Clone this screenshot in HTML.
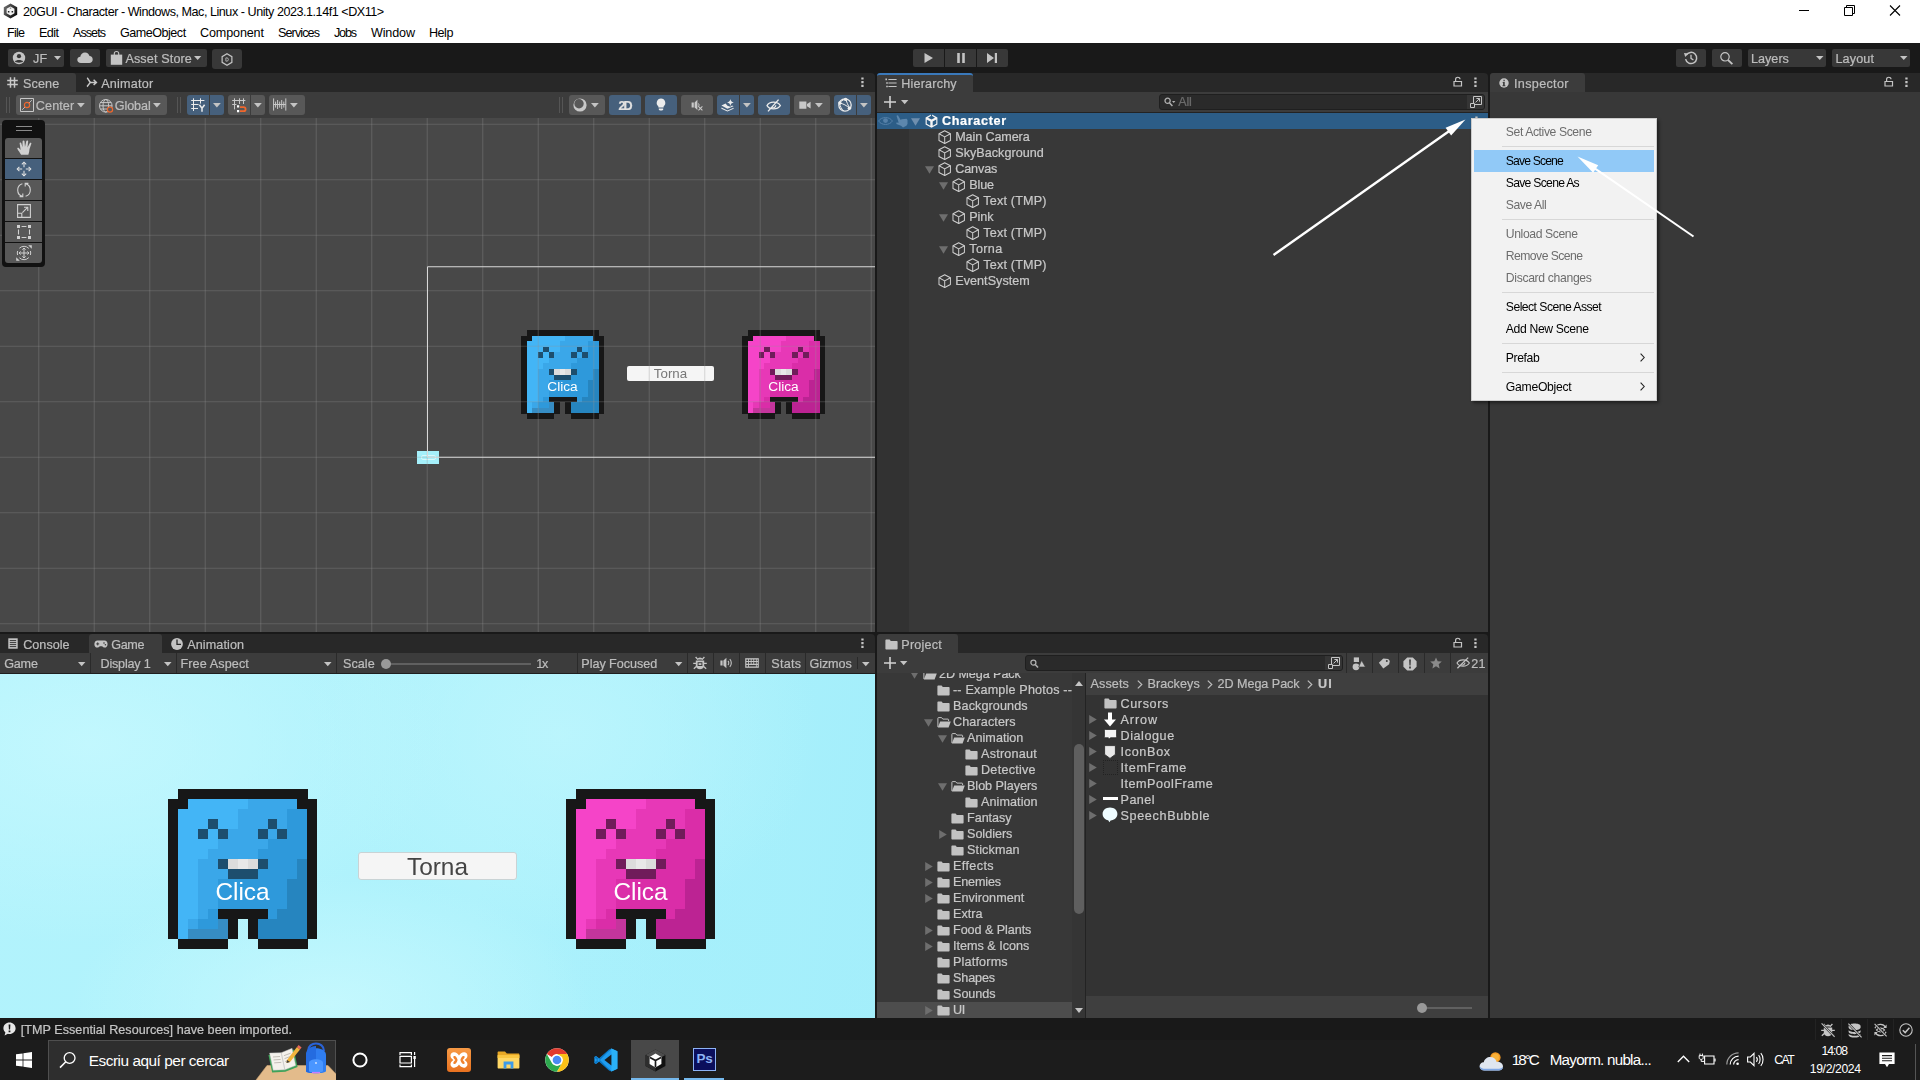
<!DOCTYPE html>
<html lang="en"><head><meta charset="utf-8"><title>20GUI - Character - Unity</title>
<style>

*{box-sizing:border-box;margin:0;padding:0}
html,body{width:1920px;height:1080px;overflow:hidden;background:#383838}
body{position:relative;font-family:"Liberation Sans",sans-serif;font-size:12px;color:#bdbdbd;line-height:1}
.a{position:absolute}
.t{position:absolute;white-space:nowrap;line-height:16px;height:16px;font-size:12.4px;letter-spacing:0.15px;-webkit-text-stroke:0.22px currentColor}
.b{position:absolute;background:#383838;border-radius:2px}
svg{position:absolute;overflow:visible}
.ic{fill:none;stroke:#c4c4c4;stroke-width:1}


.win{position:absolute;white-space:nowrap;color:#000;font-size:12px;line-height:16px;height:16px}


.tb{position:absolute;background:#383838;border-radius:2px;top:49px;height:18px}


.sb{position:absolute;background:#585858;border-radius:3px;top:95px;height:20px}
.sb.on{background:#46607c}


.clica{position:absolute;color:#fff;white-space:nowrap;text-align:center;font-family:"Liberation Sans",sans-serif}
.torna{position:absolute;background:#f5f5f5;color:#323232;text-align:center;white-space:nowrap;font-family:"Liberation Sans",sans-serif}


.tk{position:absolute;white-space:nowrap;color:#fff;line-height:20px;height:20px}


.mi{position:absolute;white-space:nowrap;font-size:12.2px;line-height:16px;height:16px;color:#000}
.mi.dis{color:#6d6d6d}

</style></head>
<body>
<svg width="0" height="0" style="position:absolute"><defs>
<linearGradient id="ug" x1="0" y1="0.2" x2="1" y2="0.8"><stop offset="0" stop-color="#707070"/><stop offset="0.5" stop-color="#3a3a3a"/><stop offset="1" stop-color="#050505"/></linearGradient>
<symbol id="blob-b" viewBox="0 0 15 16" preserveAspectRatio="none"><g shape-rendering="crispEdges"><rect x="1" y="0" width="13.02" height="1.02" fill="#171717"/><rect x="0" y="1" width="2.02" height="1.02" fill="#171717"/><rect x="2" y="1" width="6.02" height="1.02" fill="#43b5f6"/><rect x="8" y="1" width="5.02" height="1.02" fill="#3aa7e9"/><rect x="13" y="1" width="2.02" height="1.02" fill="#171717"/><rect x="0" y="2" width="1.02" height="1.02" fill="#171717"/><rect x="1" y="2" width="6.02" height="1.02" fill="#43b5f6"/><rect x="7" y="2" width="5.02" height="1.02" fill="#3aa7e9"/><rect x="12" y="2" width="2.02" height="1.02" fill="#2e99db"/><rect x="14" y="2" width="1.02" height="1.02" fill="#171717"/><rect x="0" y="3" width="1.02" height="1.02" fill="#171717"/><rect x="1" y="3" width="3.02" height="1.02" fill="#43b5f6"/><rect x="4" y="3" width="1.02" height="1.02" fill="#1d4e6e"/><rect x="5" y="3" width="2.02" height="1.02" fill="#43b5f6"/><rect x="7" y="3" width="3.02" height="1.02" fill="#3aa7e9"/><rect x="10" y="3" width="1.02" height="1.02" fill="#1d4e6e"/><rect x="11" y="3" width="1.02" height="1.02" fill="#3aa7e9"/><rect x="12" y="3" width="2.02" height="1.02" fill="#2e99db"/><rect x="14" y="3" width="1.02" height="1.02" fill="#171717"/><rect x="0" y="4" width="1.02" height="1.02" fill="#171717"/><rect x="1" y="4" width="2.02" height="1.02" fill="#43b5f6"/><rect x="3" y="4" width="1.02" height="1.02" fill="#1d4e6e"/><rect x="4" y="4" width="1.02" height="1.02" fill="#43b5f6"/><rect x="5" y="4" width="1.02" height="1.02" fill="#1d4e6e"/><rect x="6" y="4" width="3.02" height="1.02" fill="#3aa7e9"/><rect x="9" y="4" width="1.02" height="1.02" fill="#1d4e6e"/><rect x="10" y="4" width="1.02" height="1.02" fill="#3aa7e9"/><rect x="11" y="4" width="1.02" height="1.02" fill="#1d4e6e"/><rect x="12" y="4" width="2.02" height="1.02" fill="#2e99db"/><rect x="14" y="4" width="1.02" height="1.02" fill="#171717"/><rect x="0" y="5" width="1.02" height="1.02" fill="#171717"/><rect x="1" y="5" width="4.02" height="1.02" fill="#43b5f6"/><rect x="5" y="5" width="5.02" height="1.02" fill="#3aa7e9"/><rect x="10" y="5" width="4.02" height="1.02" fill="#2e99db"/><rect x="14" y="5" width="1.02" height="1.02" fill="#171717"/><rect x="0" y="6" width="1.02" height="1.02" fill="#171717"/><rect x="1" y="6" width="3.02" height="1.02" fill="#43b5f6"/><rect x="4" y="6" width="5.02" height="1.02" fill="#3aa7e9"/><rect x="9" y="6" width="5.02" height="1.02" fill="#2e99db"/><rect x="14" y="6" width="1.02" height="1.02" fill="#171717"/><rect x="0" y="7" width="1.02" height="1.02" fill="#171717"/><rect x="1" y="7" width="2.02" height="1.02" fill="#43b5f6"/><rect x="3" y="7" width="2.02" height="1.02" fill="#3aa7e9"/><rect x="5" y="7" width="1.02" height="1.02" fill="#1d4e6e"/><rect x="6" y="7" width="1.02" height="1.02" fill="#dcdcdc"/><rect x="7" y="7" width="1.02" height="1.02" fill="#e8e8e8"/><rect x="8" y="7" width="1.02" height="1.02" fill="#dcdcdc"/><rect x="9" y="7" width="1.02" height="1.02" fill="#1d4e6e"/><rect x="10" y="7" width="3.02" height="1.02" fill="#2e99db"/><rect x="13" y="7" width="1.02" height="1.02" fill="#2685bf"/><rect x="14" y="7" width="1.02" height="1.02" fill="#171717"/><rect x="0" y="8" width="1.02" height="1.02" fill="#171717"/><rect x="1" y="8" width="2.02" height="1.02" fill="#43b5f6"/><rect x="3" y="8" width="3.02" height="1.02" fill="#3aa7e9"/><rect x="6" y="8" width="3.02" height="1.02" fill="#1d4e6e"/><rect x="9" y="8" width="4.02" height="1.02" fill="#2e99db"/><rect x="13" y="8" width="1.02" height="1.02" fill="#2685bf"/><rect x="14" y="8" width="1.02" height="1.02" fill="#171717"/><rect x="0" y="9" width="1.02" height="1.02" fill="#171717"/><rect x="1" y="9" width="2.02" height="1.02" fill="#43b5f6"/><rect x="3" y="9" width="2.02" height="1.02" fill="#3aa7e9"/><rect x="5" y="9" width="7.02" height="1.02" fill="#2e99db"/><rect x="12" y="9" width="2.02" height="1.02" fill="#2685bf"/><rect x="14" y="9" width="1.02" height="1.02" fill="#171717"/><rect x="0" y="10" width="1.02" height="1.02" fill="#171717"/><rect x="1" y="10" width="2.02" height="1.02" fill="#43b5f6"/><rect x="3" y="10" width="2.02" height="1.02" fill="#3aa7e9"/><rect x="5" y="10" width="7.02" height="1.02" fill="#2e99db"/><rect x="12" y="10" width="2.02" height="1.02" fill="#2685bf"/><rect x="14" y="10" width="1.02" height="1.02" fill="#171717"/><rect x="0" y="11" width="1.02" height="1.02" fill="#171717"/><rect x="1" y="11" width="2.02" height="1.02" fill="#43b5f6"/><rect x="3" y="11" width="2.02" height="1.02" fill="#3aa7e9"/><rect x="5" y="11" width="7.02" height="1.02" fill="#2e99db"/><rect x="12" y="11" width="2.02" height="1.02" fill="#2685bf"/><rect x="14" y="11" width="1.02" height="1.02" fill="#171717"/><rect x="0" y="12" width="1.02" height="1.02" fill="#171717"/><rect x="1" y="12" width="2.02" height="1.02" fill="#43b5f6"/><rect x="3" y="12" width="1.02" height="1.02" fill="#3aa7e9"/><rect x="4" y="12" width="1.02" height="1.02" fill="#2e99db"/><rect x="5" y="12" width="5.02" height="1.02" fill="#171717"/><rect x="10" y="12" width="1.02" height="1.02" fill="#2e99db"/><rect x="11" y="12" width="3.02" height="1.02" fill="#2685bf"/><rect x="14" y="12" width="1.02" height="1.02" fill="#171717"/><rect x="0" y="13" width="1.02" height="1.02" fill="#171717"/><rect x="1" y="13" width="1.02" height="1.02" fill="#43b5f6"/><rect x="2" y="13" width="1.02" height="1.02" fill="#3aa7e9"/><rect x="3" y="13" width="2.02" height="1.02" fill="#2e99db"/><rect x="5" y="13" width="1.02" height="1.02" fill="#368dc4"/><rect x="6" y="13" width="1.02" height="1.02" fill="#171717"/><rect x="8" y="13" width="1.02" height="1.02" fill="#171717"/><rect x="9" y="13" width="5.02" height="1.02" fill="#2685bf"/><rect x="14" y="13" width="1.02" height="1.02" fill="#171717"/><rect x="0" y="14" width="1.02" height="1.02" fill="#171717"/><rect x="1" y="14" width="1.02" height="1.02" fill="#43b5f6"/><rect x="2" y="14" width="4.02" height="1.02" fill="#368dc4"/><rect x="6" y="14" width="1.02" height="1.02" fill="#171717"/><rect x="8" y="14" width="1.02" height="1.02" fill="#171717"/><rect x="9" y="14" width="5.02" height="1.02" fill="#2685bf"/><rect x="14" y="14" width="1.02" height="1.02" fill="#171717"/><rect x="1" y="15" width="5.02" height="1.02" fill="#171717"/><rect x="9" y="15" width="5.02" height="1.02" fill="#171717"/></g></symbol>
<symbol id="blob-p" viewBox="0 0 15 16" preserveAspectRatio="none"><g shape-rendering="crispEdges"><rect x="1" y="0" width="13.02" height="1.02" fill="#171717"/><rect x="0" y="1" width="2.02" height="1.02" fill="#171717"/><rect x="2" y="1" width="6.02" height="1.02" fill="#f544c8"/><rect x="8" y="1" width="5.02" height="1.02" fill="#e738b7"/><rect x="13" y="1" width="2.02" height="1.02" fill="#171717"/><rect x="0" y="2" width="1.02" height="1.02" fill="#171717"/><rect x="1" y="2" width="6.02" height="1.02" fill="#f544c8"/><rect x="7" y="2" width="5.02" height="1.02" fill="#e738b7"/><rect x="12" y="2" width="2.02" height="1.02" fill="#da2da8"/><rect x="14" y="2" width="1.02" height="1.02" fill="#171717"/><rect x="0" y="3" width="1.02" height="1.02" fill="#171717"/><rect x="1" y="3" width="3.02" height="1.02" fill="#f544c8"/><rect x="4" y="3" width="1.02" height="1.02" fill="#701c5a"/><rect x="5" y="3" width="2.02" height="1.02" fill="#f544c8"/><rect x="7" y="3" width="3.02" height="1.02" fill="#e738b7"/><rect x="10" y="3" width="1.02" height="1.02" fill="#701c5a"/><rect x="11" y="3" width="1.02" height="1.02" fill="#e738b7"/><rect x="12" y="3" width="2.02" height="1.02" fill="#da2da8"/><rect x="14" y="3" width="1.02" height="1.02" fill="#171717"/><rect x="0" y="4" width="1.02" height="1.02" fill="#171717"/><rect x="1" y="4" width="2.02" height="1.02" fill="#f544c8"/><rect x="3" y="4" width="1.02" height="1.02" fill="#701c5a"/><rect x="4" y="4" width="1.02" height="1.02" fill="#f544c8"/><rect x="5" y="4" width="1.02" height="1.02" fill="#701c5a"/><rect x="6" y="4" width="3.02" height="1.02" fill="#e738b7"/><rect x="9" y="4" width="1.02" height="1.02" fill="#701c5a"/><rect x="10" y="4" width="1.02" height="1.02" fill="#e738b7"/><rect x="11" y="4" width="1.02" height="1.02" fill="#701c5a"/><rect x="12" y="4" width="2.02" height="1.02" fill="#da2da8"/><rect x="14" y="4" width="1.02" height="1.02" fill="#171717"/><rect x="0" y="5" width="1.02" height="1.02" fill="#171717"/><rect x="1" y="5" width="4.02" height="1.02" fill="#f544c8"/><rect x="5" y="5" width="5.02" height="1.02" fill="#e738b7"/><rect x="10" y="5" width="4.02" height="1.02" fill="#da2da8"/><rect x="14" y="5" width="1.02" height="1.02" fill="#171717"/><rect x="0" y="6" width="1.02" height="1.02" fill="#171717"/><rect x="1" y="6" width="3.02" height="1.02" fill="#f544c8"/><rect x="4" y="6" width="5.02" height="1.02" fill="#e738b7"/><rect x="9" y="6" width="5.02" height="1.02" fill="#da2da8"/><rect x="14" y="6" width="1.02" height="1.02" fill="#171717"/><rect x="0" y="7" width="1.02" height="1.02" fill="#171717"/><rect x="1" y="7" width="2.02" height="1.02" fill="#f544c8"/><rect x="3" y="7" width="2.02" height="1.02" fill="#e738b7"/><rect x="5" y="7" width="1.02" height="1.02" fill="#701c5a"/><rect x="6" y="7" width="1.02" height="1.02" fill="#dcdcdc"/><rect x="7" y="7" width="1.02" height="1.02" fill="#e8e8e8"/><rect x="8" y="7" width="1.02" height="1.02" fill="#dcdcdc"/><rect x="9" y="7" width="1.02" height="1.02" fill="#701c5a"/><rect x="10" y="7" width="3.02" height="1.02" fill="#da2da8"/><rect x="13" y="7" width="1.02" height="1.02" fill="#bc2393"/><rect x="14" y="7" width="1.02" height="1.02" fill="#171717"/><rect x="0" y="8" width="1.02" height="1.02" fill="#171717"/><rect x="1" y="8" width="2.02" height="1.02" fill="#f544c8"/><rect x="3" y="8" width="3.02" height="1.02" fill="#e738b7"/><rect x="6" y="8" width="3.02" height="1.02" fill="#701c5a"/><rect x="9" y="8" width="4.02" height="1.02" fill="#da2da8"/><rect x="13" y="8" width="1.02" height="1.02" fill="#bc2393"/><rect x="14" y="8" width="1.02" height="1.02" fill="#171717"/><rect x="0" y="9" width="1.02" height="1.02" fill="#171717"/><rect x="1" y="9" width="2.02" height="1.02" fill="#f544c8"/><rect x="3" y="9" width="2.02" height="1.02" fill="#e738b7"/><rect x="5" y="9" width="7.02" height="1.02" fill="#da2da8"/><rect x="12" y="9" width="2.02" height="1.02" fill="#bc2393"/><rect x="14" y="9" width="1.02" height="1.02" fill="#171717"/><rect x="0" y="10" width="1.02" height="1.02" fill="#171717"/><rect x="1" y="10" width="2.02" height="1.02" fill="#f544c8"/><rect x="3" y="10" width="2.02" height="1.02" fill="#e738b7"/><rect x="5" y="10" width="7.02" height="1.02" fill="#da2da8"/><rect x="12" y="10" width="2.02" height="1.02" fill="#bc2393"/><rect x="14" y="10" width="1.02" height="1.02" fill="#171717"/><rect x="0" y="11" width="1.02" height="1.02" fill="#171717"/><rect x="1" y="11" width="2.02" height="1.02" fill="#f544c8"/><rect x="3" y="11" width="2.02" height="1.02" fill="#e738b7"/><rect x="5" y="11" width="7.02" height="1.02" fill="#da2da8"/><rect x="12" y="11" width="2.02" height="1.02" fill="#bc2393"/><rect x="14" y="11" width="1.02" height="1.02" fill="#171717"/><rect x="0" y="12" width="1.02" height="1.02" fill="#171717"/><rect x="1" y="12" width="2.02" height="1.02" fill="#f544c8"/><rect x="3" y="12" width="1.02" height="1.02" fill="#e738b7"/><rect x="4" y="12" width="1.02" height="1.02" fill="#da2da8"/><rect x="5" y="12" width="5.02" height="1.02" fill="#171717"/><rect x="10" y="12" width="1.02" height="1.02" fill="#da2da8"/><rect x="11" y="12" width="3.02" height="1.02" fill="#bc2393"/><rect x="14" y="12" width="1.02" height="1.02" fill="#171717"/><rect x="0" y="13" width="1.02" height="1.02" fill="#171717"/><rect x="1" y="13" width="1.02" height="1.02" fill="#f544c8"/><rect x="2" y="13" width="1.02" height="1.02" fill="#e738b7"/><rect x="3" y="13" width="2.02" height="1.02" fill="#da2da8"/><rect x="5" y="13" width="1.02" height="1.02" fill="#c4359c"/><rect x="6" y="13" width="1.02" height="1.02" fill="#171717"/><rect x="8" y="13" width="1.02" height="1.02" fill="#171717"/><rect x="9" y="13" width="5.02" height="1.02" fill="#bc2393"/><rect x="14" y="13" width="1.02" height="1.02" fill="#171717"/><rect x="0" y="14" width="1.02" height="1.02" fill="#171717"/><rect x="1" y="14" width="1.02" height="1.02" fill="#f544c8"/><rect x="2" y="14" width="4.02" height="1.02" fill="#c4359c"/><rect x="6" y="14" width="1.02" height="1.02" fill="#171717"/><rect x="8" y="14" width="1.02" height="1.02" fill="#171717"/><rect x="9" y="14" width="5.02" height="1.02" fill="#bc2393"/><rect x="14" y="14" width="1.02" height="1.02" fill="#171717"/><rect x="1" y="15" width="5.02" height="1.02" fill="#171717"/><rect x="9" y="15" width="5.02" height="1.02" fill="#171717"/></g></symbol>
<symbol id="cube" viewBox="0 0 14 15"><g stroke="#d0d0d0" stroke-width="1.05" fill="none" stroke-linejoin="round"><path d="M7 0.8 L13 3.9 V11 L7 14.2 L1 11 V3.9 Z"/><path d="M1 3.9 L7 7.2 L13 3.9 M7 7.2 V14.2"/></g></symbol>
<symbol id="fold-c" viewBox="0 0 13 11"><path d="M0.4 1.2 C0.4 0.7 0.7 0.4 1.2 0.4 H4.6 L5.8 1.9 H11.8 C12.3 1.9 12.6 2.2 12.6 2.7 V9.8 C12.6 10.3 12.3 10.6 11.8 10.6 H1.2 C0.7 10.6 0.4 10.3 0.4 9.8 Z" fill="#c2c2c2"/></symbol>
<symbol id="fold-o" viewBox="0 0 14 11"><path d="M0.9 10 V1.2 C0.9 0.8 1.1 0.6 1.5 0.6 H4.6 L5.8 2.1 H11 C11.4 2.1 11.6 2.3 11.6 2.7 V4" stroke="#c2c2c2" stroke-width="1" fill="none"/><path d="M3.2 4.4 H13.8 L11.6 10.6 H0.8 Z" fill="#c2c2c2"/></symbol>
</defs></svg>
<div class="a" style="left:0px;top:0px;width:1920px;height:43px;background:#fff;"></div>
<svg class="a" style="left:3px;top:3px" width="15" height="16" viewBox="0 0 15 16">
<path d="M7.5 0.4 L14.2 4.2 V11.8 L7.5 15.6 L0.8 11.8 V4.2 Z" fill="url(#ug)"/>
<path d="M7.5 3.4 L11.4 5.7 V10.3 L7.5 12.6 L3.6 10.3 V5.7 Z" fill="#f2f2f2"/>
<path d="M6.8 4.6 h1.4 v1.5 h-1.4 Z" fill="#9a9a9a"/><path d="M4.9 8 h1.5 v1.6 h-1.5 Z M8.6 8 h1.5 v1.6 h-1.5 Z" fill="#222"/>
</svg>
<div class="win" id="title" style="left:23px;top:4px;font-size:12.6px;letter-spacing:-0.47px;">20GUI - Character - Windows, Mac, Linux - Unity 2023.1.14f1 &lt;DX11&gt;</div>
<div class="win" id="m0" style="left:7px;top:25px;font-size:12.6px;letter-spacing:-0.767px;">File</div>
<div class="win" id="m1" style="left:39px;top:25px;font-size:12.6px;letter-spacing:-0.57px;">Edit</div>
<div class="win" id="m2" style="left:73px;top:25px;font-size:12.6px;letter-spacing:-0.962px;">Assets</div>
<div class="win" id="m3" style="left:120px;top:25px;font-size:12.6px;letter-spacing:-0.503px;">GameObject</div>
<div class="win" id="m4" style="left:200px;top:25px;font-size:12.6px;letter-spacing:-0.142px;">Component</div>
<div class="win" id="m5" style="left:278px;top:25px;font-size:12.6px;letter-spacing:-0.902px;">Services</div>
<div class="win" id="m6" style="left:334px;top:25px;font-size:12.6px;letter-spacing:-1.205px;">Jobs</div>
<div class="win" id="m7" style="left:371px;top:25px;font-size:12.6px;letter-spacing:-0.163px;">Window</div>
<div class="win" id="m8" style="left:429px;top:25px;font-size:12.6px;letter-spacing:-0.504px;">Help</div>
<svg class="a" style="left:1780px;top:0" width="140" height="22" viewBox="0 0 140 22">
<path d="M19 10.5 H29" stroke="#000" stroke-width="1" fill="none"/>
<path d="M64.5 7.5 H72.5 V15.5 H64.5 Z M66.5 7.5 V5.5 H74.5 V13.5 H72.5" stroke="#000" stroke-width="1" fill="none"/>
<path d="M110 5.5 L120 15.5 M120 5.5 L110 15.5" stroke="#000" stroke-width="1.1" fill="none"/>
</svg>
<div id="unity" style="position:absolute;left:0;top:0;width:1920px;height:1080px;will-change:transform">
<div class="a" style="left:0px;top:43px;width:1920px;height:30px;background:#191919;"></div>
<div class="tb" style="left:8px;width:56px;"></div>
<svg class="a" style="left:12px;top:51px" width="14" height="14" viewBox="0 0 14 14">
<circle cx="7" cy="7" r="6.2" fill="#c4c4c4"/><circle cx="7" cy="5.2" r="2.1" fill="#383838"/>
<path d="M2.9 10.6 C4 8.6 10 8.6 11.1 10.6 C10 12 4 12 2.9 10.6 Z" fill="#383838"/></svg>
<div class="t" style="left:33px;top:51px;font-size:12.6px;letter-spacing:0.104px;">JF</div>
<svg class="a" style="left:53.5px;top:56.3px" width="7" height="4" viewBox="0 0 7 4"><path d="M0 0 H7 L3.5 4 Z" fill="#c4c4c4"/></svg>
<div class="tb" style="left:70px;width:30px;"></div>
<svg class="a" style="left:77px;top:52px" width="16" height="11" viewBox="0 0 16 11">
<path d="M4 11 C1.5 11 0.3 9.4 0.3 7.8 C0.3 6 1.8 4.8 3.3 4.8 C3.6 2.2 5.6 0.4 8 0.4 C10.4 0.4 12 2 12.5 4 C14.5 4.1 15.7 5.6 15.7 7.4 C15.7 9.4 14.2 11 12.3 11 Z" fill="#c4c4c4"/></svg>
<div class="tb" style="left:106px;width:101px;"></div>
<svg class="a" style="left:110px;top:50px" width="13" height="15" viewBox="0 0 13 15">
<path d="M0.8 4.6 H12.2 V14.8 H0.8 Z" fill="#c4c4c4"/><path d="M4.3 5 V3.4 C4.3 0.8 8.7 0.8 8.7 3.4 V5" stroke="#c4c4c4" stroke-width="1.1" fill="none"/></svg>
<div class="t" style="left:125.4px;top:51px;font-size:12.6px;letter-spacing:0.137px;">Asset Store</div>
<svg class="a" style="left:194.3px;top:56.3px" width="7.3" height="4" viewBox="0 0 7.3 4"><path d="M0 0 H7.3 L3.65 4 Z" fill="#c4c4c4"/></svg>
<div class="tb" style="left:212px;width:30px;height:19.5px;border-radius:3px"></div>
<svg class="a" style="left:221px;top:52.5px" width="12" height="13" viewBox="0 0 14 16">
<path d="M7 1 L13 4.5 V11.5 L7 15 L1 11.5 V4.5 Z" stroke="#c4c4c4" stroke-width="1.5" fill="none"/>
<path d="M5.6 6 H7 C9.3 6 9.3 10 7 10 H5.6 Z" stroke="#c4c4c4" stroke-width="1" fill="none"/></svg>
<div class="tb" style="left:913px;width:31px;border-radius:2px 0 0 2px"></div>
<div class="tb" style="left:945px;width:31px;border-radius:0"></div>
<div class="tb" style="left:977px;width:31px;border-radius:0 2px 2px 0"></div>
<svg class="a" style="left:913px;top:49px" width="95" height="18" viewBox="0 0 95 18">
<path d="M11.5 4 L20 9 L11.5 14 Z" fill="#c4c4c4"/>
<path d="M44.2 4 h2.6 v10 h-2.6 Z M49.2 4 h2.6 v10 h-2.6 Z" fill="#c4c4c4"/>
<path d="M74 4 L81 9 L74 14 Z M81.8 4 h2.2 v10 h-2.2 Z" fill="#c4c4c4"/></svg>
<div class="tb" style="left:1676px;width:30px;"></div>
<div class="tb" style="left:1712px;width:30px;"></div>
<div class="tb" style="left:1748px;width:78px;"></div>
<div class="tb" style="left:1832px;width:78px;"></div>
<svg class="a" style="left:1683px;top:50px" width="16" height="16" viewBox="0 0 16 16">
<path d="M3.2 5.2 A5.6 5.6 0 1 1 2.6 9.2" stroke="#c4c4c4" stroke-width="1.5" fill="none"/>
<path d="M1 3 L5.4 3.6 L2.2 7 Z" fill="#c4c4c4"/>
<path d="M8 4.8 V8.4 L10.4 10" stroke="#c4c4c4" stroke-width="1.3" fill="none"/></svg>
<svg class="a" style="left:1719px;top:51px" width="15" height="15" viewBox="0 0 15 15">
<circle cx="6" cy="5.8" r="4.2" stroke="#c4c4c4" stroke-width="1.2" fill="none"/>
<path d="M9 9 L13.4 13.2" stroke="#c4c4c4" stroke-width="1.8" fill="none"/></svg>
<div class="t" style="left:1751px;top:51px;font-size:12.6px;letter-spacing:0.017px;">Layers</div>
<svg class="a" style="left:1815.5px;top:56.3px" width="7.5" height="4" viewBox="0 0 7.5 4"><path d="M0 0 H7.5 L3.75 4 Z" fill="#c4c4c4"/></svg>
<div class="t" style="left:1835.5px;top:51px;font-size:12.6px;letter-spacing:0.114px;">Layout</div>
<svg class="a" style="left:1899.5px;top:56.3px" width="7.5" height="4" viewBox="0 0 7.5 4"><path d="M0 0 H7.5 L3.75 4 Z" fill="#c4c4c4"/></svg>
<div class="a" style="left:0px;top:73px;width:1920px;height:945px;background:#191919;"></div>
<div class="a" style="left:0px;top:73px;width:875px;height:559px;background:#282828;border-radius:0 4px 0 0"></div>
<div class="a" style="left:877px;top:73px;width:611px;height:559px;background:#282828;border-radius:4px 4px 0 0"></div>
<div class="a" style="left:1490px;top:73px;width:430px;height:945px;background:#282828;border-radius:4px 0 0 0"></div>
<div class="a" style="left:0px;top:634px;width:875px;height:384px;background:#282828;border-radius:0 4px 0 0"></div>
<div class="a" style="left:877px;top:634px;width:611px;height:384px;background:#282828;border-radius:4px 4px 0 0"></div>
<div class="a" style="left:0px;top:73px;width:76px;height:19px;background:#3c3c3c;border-radius:0 3px 0 0"></div>
<svg class="a" style="left:7px;top:77px" width="11" height="11" viewBox="0 0 11 11"><path d="M3.5 0.3 V10.7 M7.5 0.3 V10.7 M0.2 3.5 H10.8 M0.2 7.5 H10.8" stroke="#c8c8c8" stroke-width="1.5" fill="none"/></svg>
<div class="t" style="left:23px;top:76px;font-size:12.6px;letter-spacing:0.119px;">Scene</div>
<svg class="a" style="left:86px;top:77px" width="12" height="11" viewBox="0 0 12 11"><path d="M1 1 C2.4 1.4 3 4.6 4.6 5.4 H10.2 M4.6 5.4 C3 6.2 2.4 8.6 1 9.6 M7.6 2.8 L10.4 5.4 L7.6 8" stroke="#c8c8c8" stroke-width="1.5" fill="none"/></svg>
<div class="t" style="left:101.2px;top:76px;font-size:12.6px;letter-spacing:0.241px;">Animator</div>
<svg class="a" style="left:861px;top:77px" width="3" height="11" viewBox="0 0 3 11"><path d="M0.3 0.4h2.3v2.1h-2.3z M0.3 4.1h2.3v2.1h-2.3z M0.3 7.8h2.3v2.1h-2.3z" fill="#c4c4c4"/></svg>
<div class="a" style="left:877px;top:73px;width:96px;height:19px;background:#3c3c3c;border-radius:3px 3px 0 0;border-top:2px solid #3a79bb"></div>
<svg class="a" style="left:885px;top:78px" width="12" height="10" viewBox="0 0 12 10"><path d="M3.4 1.5 H11.6 M3.4 5 H11.6 M3.4 8.5 H11.6" stroke="#c4c4c4" stroke-width="1.1" fill="none"/><path d="M0.4 0.6h1.6v1.6h-1.6z M1.2 4.2h1.6v1.6h-1.6z M1.2 7.7h1.6v1.6h-1.6z" fill="#c4c4c4"/></svg>
<div class="t" style="left:901.2px;top:76px;font-size:12.6px;letter-spacing:0.199px;">Hierarchy</div>
<svg class="a" style="left:1453.3px;top:76.3px" width="10" height="11" viewBox="0 0 10 11"><path d="M1 5.5 H8.5 V10 H1 Z" stroke="#c4c4c4" stroke-width="1.2" fill="none"/><path d="M2.6 5.2 V3.2 C2.6 0.6 7 0.6 7 3.2" stroke="#c4c4c4" stroke-width="1.2" fill="none"/></svg>
<svg class="a" style="left:1473.8px;top:77px" width="3" height="11" viewBox="0 0 3 11"><path d="M0.3 0.4h2.3v2.1h-2.3z M0.3 4.1h2.3v2.1h-2.3z M0.3 7.8h2.3v2.1h-2.3z" fill="#c4c4c4"/></svg>
<div class="a" style="left:1490px;top:73px;width:95px;height:19px;background:#3c3c3c;border-radius:3px 3px 0 0"></div>
<svg class="a" style="left:1499px;top:78px" width="10" height="10" viewBox="0 0 11 11"><circle cx="5.5" cy="5.5" r="5.2" fill="#c4c4c4"/><path d="M4.9 2 h1.4 v1.5 h-1.4 Z M4.4 4.5 h1.9 v3.6 h0.7 v0.9 h-3.2 v-0.9 h0.7 v-2.7 h-0.7 Z" fill="#3c3c3c"/></svg>
<div class="t" style="left:1514px;top:76px;font-size:12.6px;letter-spacing:0.335px;">Inspector</div>
<svg class="a" style="left:1884.3px;top:76.3px" width="10" height="11" viewBox="0 0 10 11"><path d="M1 5.5 H8.5 V10 H1 Z" stroke="#c4c4c4" stroke-width="1.2" fill="none"/><path d="M2.6 5.2 V3.2 C2.6 0.6 7 0.6 7 3.2" stroke="#c4c4c4" stroke-width="1.2" fill="none"/></svg>
<svg class="a" style="left:1904.8px;top:77px" width="3" height="11" viewBox="0 0 3 11"><path d="M0.3 0.4h2.3v2.1h-2.3z M0.3 4.1h2.3v2.1h-2.3z M0.3 7.8h2.3v2.1h-2.3z" fill="#c4c4c4"/></svg>
<div class="a" style="left:1490px;top:92px;width:430px;height:926px;background:#383838;"></div>
<div class="a" style="left:0px;top:92px;width:875px;height:26px;background:#3c3c3c;"></div>
<div class="a" style="left:6px;top:97px;width:1px;height:16px;background:#555;"></div><div class="a" style="left:9px;top:97px;width:1px;height:16px;background:#555;"></div>
<div class="a" style="left:177px;top:97px;width:1px;height:16px;background:#555;"></div><div class="a" style="left:180px;top:97px;width:1px;height:16px;background:#555;"></div>
<div class="a" style="left:559px;top:97px;width:1px;height:16px;background:#555;"></div><div class="a" style="left:562px;top:97px;width:1px;height:16px;background:#555;"></div>
<div class="sb" style="left:16px;width:75px;"></div>
<div class="sb" style="left:95px;width:72px;"></div>
<div class="t" style="left:35.8px;top:98px;font-size:12.6px;letter-spacing:0.117px;">Center</div>
<svg class="a" style="left:77.4px;top:103.2px" width="7.8" height="4.6" viewBox="0 0 7.8 4.6"><path d="M0 0 H7.8 L3.9 4.6 Z" fill="#c4c4c4"/></svg>
<div class="t" style="left:114.8px;top:98px;font-size:12.6px;letter-spacing:-0.104px;">Global</div>
<svg class="a" style="left:153.4px;top:103.2px" width="7.8" height="4.6" viewBox="0 0 7.8 4.6"><path d="M0 0 H7.8 L3.9 4.6 Z" fill="#c4c4c4"/></svg>
<div class="sb on" style="left:187px;width:22px;border-radius:3px 0 0 3px"></div>
<div class="sb on" style="left:210px;width:14px;border-radius:0 3px 3px 0"></div>
<svg class="a" style="left:212.9px;top:103.2px" width="7.8" height="4.6" viewBox="0 0 7.8 4.6"><path d="M0 0 H7.8 L3.9 4.6 Z" fill="#c4c4c4"/></svg>
<div class="sb" style="left:228px;width:22px;border-radius:3px 0 0 3px"></div>
<div class="sb" style="left:251px;width:14px;border-radius:0 3px 3px 0"></div>
<svg class="a" style="left:253.9px;top:103.2px" width="7.8" height="4.6" viewBox="0 0 7.8 4.6"><path d="M0 0 H7.8 L3.9 4.6 Z" fill="#c4c4c4"/></svg>
<div class="sb" style="left:269px;width:36px;"></div>
<svg class="a" style="left:290.4px;top:103.2px" width="7.8" height="4.6" viewBox="0 0 7.8 4.6"><path d="M0 0 H7.8 L3.9 4.6 Z" fill="#c4c4c4"/></svg>
<div class="sb" style="left:569px;width:36px;"></div>
<svg class="a" style="left:590.9px;top:103.2px" width="7.8" height="4.6" viewBox="0 0 7.8 4.6"><path d="M0 0 H7.8 L3.9 4.6 Z" fill="#c4c4c4"/></svg>
<div class="sb on" style="left:609px;width:32px;"></div>
<div class="sb on" style="left:645px;width:32px;"></div>
<div class="sb" style="left:681px;width:32px;"></div>
<div class="sb on" style="left:717px;width:22px;border-radius:3px 0 0 3px"></div>
<div class="sb on" style="left:740px;width:14px;border-radius:0 3px 3px 0"></div>
<svg class="a" style="left:742.9px;top:103.2px" width="7.8" height="4.6" viewBox="0 0 7.8 4.6"><path d="M0 0 H7.8 L3.9 4.6 Z" fill="#c4c4c4"/></svg>
<div class="sb on" style="left:758px;width:32px;"></div>
<div class="sb" style="left:794px;width:36px;"></div>
<svg class="a" style="left:815.4px;top:103.2px" width="7.8" height="4.6" viewBox="0 0 7.8 4.6"><path d="M0 0 H7.8 L3.9 4.6 Z" fill="#c4c4c4"/></svg>
<div class="sb on" style="left:834px;width:22px;border-radius:3px 0 0 3px"></div>
<div class="sb on" style="left:857px;width:14px;border-radius:0 3px 3px 0"></div>
<svg class="a" style="left:859.9px;top:103.2px" width="7.8" height="4.6" viewBox="0 0 7.8 4.6"><path d="M0 0 H7.8 L3.9 4.6 Z" fill="#c4c4c4"/></svg>
<div class="t" style="left:618.6px;top:98px;font-size:12.6px;letter-spacing:-2.206px;font-weight:bold;color:#e0e0e0">2D</div>
<div class="a" style="left:0;top:118px;width:875px;height:514px;background:#484848"></div>
<svg class="a" style="left:20px;top:98px" width="14" height="14" viewBox="0 0 14 14"><path d="M0.5 0.5 H13.5 V13.5 H0.5 Z" stroke="#c8c8c8" stroke-width="1" fill="none"/><path d="M2.2 11.8 L11.8 2.2" stroke="#c8c8c8" stroke-width="0.9" fill="none"/><circle cx="7" cy="7" r="2.6" stroke="#f0672d" stroke-width="1.2" fill="#585858"/></svg>
<svg class="a" style="left:99px;top:98.5px" width="16" height="15" viewBox="0 0 16 15"><g stroke="#c8c8c8" stroke-width="1" fill="none"><circle cx="6.8" cy="6.8" r="6.3"/><ellipse cx="6.8" cy="6.8" rx="2.8" ry="6.3"/><path d="M0.5 6.8 H13.1 M1.4 3.6 H12.2 M1.4 10 H8"/></g><circle cx="11" cy="10.6" r="2.6" stroke="#f0672d" stroke-width="1.2" fill="#585858"/></svg>
<svg class="a" style="left:191px;top:98px" width="14" height="14" viewBox="0 0 14 14"><g stroke="#ececec" stroke-width="1" fill="none"><path d="M2.5 0.3 V13 M9.5 0.3 V5.6 M0.2 2.5 H13.4 M0.2 6.5 H7.6 M0.2 10.5 H7"/><path d="M8.4 6.8 L11 10.2 L13.6 6.8 M11 10.2 V13.8" stroke-width="1.5"/></g></svg>
<svg class="a" style="left:232px;top:98px" width="15" height="15" viewBox="0 0 15 15"><g stroke="#c8c8c8" stroke-width="1" fill="none"><path d="M2.5 0.3 V11.4 M7.5 0.3 V6 M11.5 0.3 V6 M0.2 2.5 H13.4 M0.2 6.5 H4.4"/></g><path d="M8 9.2 H11.6 A2 2 0 0 1 11.6 13.2 H8" stroke="#f0672d" stroke-width="1.8" fill="none"/><path d="M5 7.2h2.2v2.2h-2.2z M5 12.1h2.2v2.2h-2.2z" fill="#fff"/></svg>
<svg class="a" style="left:273px;top:98px" width="14" height="13" viewBox="0 0 14 13"><g stroke="#c8c8c8" stroke-width="1" fill="none"><path d="M0.6 0.4 V12.6 M12.8 0.4 V12.6 M0.6 6.5 H12.8 M2.6 3.6 V9.6 M4.6 2 V11 M6.7 3.6 V9.6 M8.7 2 V11 M10.8 3.6 V9.6"/></g></svg>
<svg class="a" style="left:573px;top:98px" width="14" height="14" viewBox="0 0 14 14"><circle cx="7" cy="7" r="6.6" fill="#c8c8c8"/><circle cx="6" cy="5.8" r="4.7" fill="#585858"/></svg>
<svg class="a" style="left:655px;top:98px" width="12" height="14" viewBox="0 0 12 14"><path d="M6 0.4 A4.5 4.5 0 0 1 8.6 8.4 V9.6 H3.4 V8.4 A4.5 4.5 0 0 1 6 0.4 Z" fill="#ececec"/><path d="M3.8 10.6 H8.2 V11.4 C8.2 12.8 3.8 12.8 3.8 11.4 Z" fill="#ececec"/></svg>
<svg class="a" style="left:691px;top:99px" width="13" height="12" viewBox="0 0 13 12"><path d="M0.6 3.4 H2.8 V8.4 H0.6 Z M3.6 3.4 L6.4 0.8 V11 L3.6 8.4 Z" fill="#c8c8c8"/><path d="M7.2 4.4 C8.4 5 8.4 7 7.2 7.6" stroke="#c8c8c8" stroke-width="1" fill="none"/><path d="M7.4 7.4 L11.4 11.4 M11.4 7.4 L7.4 11.4" stroke="#c8c8c8" stroke-width="1.1" fill="none"/></svg>
<svg class="a" style="left:721px;top:98.5px" width="14" height="13" viewBox="0 0 14 13"><path d="M9.4 0 C9.7 2 10.6 3 12.8 3.4 C10.6 3.8 9.7 4.8 9.4 7 C9.1 4.8 8.2 3.8 6 3.4 C8.2 3 9.1 2 9.4 0 Z" fill="#ececec"/><path d="M0.4 6.4 L4.6 4.4 L6.4 6.8 L9.4 7.8 L11 6.6 L12.6 7.2 L6.4 9.8 Z" fill="#ececec"/><path d="M0.4 8.6 L6.4 11.4 L12.6 8.8 L12.6 9.8 L6.4 12.6 L0.4 9.8 Z" fill="#ececec"/></svg>
<svg class="a" style="left:766px;top:98.5px" width="16" height="13" viewBox="0 0 16 13"><g stroke="#ececec" stroke-width="1.2" fill="none"><path d="M1 6.6 C3.6 2 11.4 2 14.4 6.6 C11.4 11 3.6 11 1 6.6 Z"/><path d="M6 8.6 C7.4 9.4 9.6 8.4 9.8 6.2"/><path d="M12.6 0.6 L2 12.4" stroke-width="1.4"/></g></svg>
<svg class="a" style="left:799px;top:101px" width="12" height="8" viewBox="0 0 12 8"><path d="M0.3 0.4 H7.4 V7.8 H0.3 Z M8 3 L11.6 0.8 V7.4 L8 5.2 Z" fill="#c8c8c8"/></svg>
<svg class="a" style="left:838px;top:98px" width="14" height="14" viewBox="0 0 14 14"><g stroke="#ececec" fill="none"><circle cx="7" cy="7" r="6.2" stroke-width="1.3"/><path stroke-width="1" d="M1.6 5 C5 5.6 9 7.6 11.6 10.4 M7.6 1 C8.6 4 10.2 7.4 11.6 10.4 M7.6 1 C5 1.8 2.6 3.4 1.6 5 M1.6 5 C2 8.4 3.6 11.4 6 13"/></g><circle cx="7.6" cy="1.4" r="1.7" fill="#ececec"/><circle cx="1.8" cy="5" r="1.7" fill="#ececec"/><circle cx="11.4" cy="10.2" r="1.7" fill="#ececec"/></svg>
<svg class="a" style="left:521px;top:330px" width="83.3" height="89"><use href="#blob-b" width="83.3" height="89"/></svg>
<svg class="a" style="left:742px;top:330px" width="83.3" height="89"><use href="#blob-p" width="83.3" height="89"/></svg>
<div class="clica" style="left:521px;top:379px;width:83px;font-size:13.7px;line-height:16px">Clica</div>
<div class="clica" style="left:742px;top:379px;width:83px;font-size:13.7px;line-height:16px">Clica</div>
<div class="torna" style="left:627px;top:365.5px;width:87px;height:15.5px;border-radius:2px;font-size:13.3px;line-height:15.5px;color:#777">Torna</div>
<div class="a" style="left:417px;top:451px;width:22px;height:13px;background:#a5f0fb;"></div>
<div class="a" style="left:420.5px;top:454.5px;width:15px;height:5px;border:1px solid #d9f8fc;border-radius:2px"></div>
<div class="a" style="left:0;top:118px;width:875px;height:514px;overflow:hidden"><svg class="a" style="left:0;top:0" width="875" height="514" viewBox="0 0 875 514"><g stroke="rgba(150,150,150,0.31)" stroke-width="1.15" fill="none"><path d="M38.75 0 V514"/><path d="M94.25 0 V514"/><path d="M149.75 0 V514"/><path d="M205.25 0 V514"/><path d="M260.75 0 V514"/><path d="M316.25 0 V514"/><path d="M371.75 0 V514"/><path d="M427.25 0 V514"/><path d="M482.75 0 V514"/><path d="M538.25 0 V514"/><path d="M593.75 0 V514"/><path d="M649.25 0 V514"/><path d="M704.75 0 V514"/><path d="M760.25 0 V514"/><path d="M815.75 0 V514"/><path d="M871.25 0 V514"/><path d="M0 6.25 H875"/><path d="M0 61.75 H875"/><path d="M0 117.25 H875"/><path d="M0 172.75 H875"/><path d="M0 228.25 H875"/><path d="M0 283.75 H875"/><path d="M0 339.25 H875"/><path d="M0 394.75 H875"/><path d="M0 450.25 H875"/><path d="M0 505.75 H875"/></g><path d="M880 148.75 H427.5 V339.25 H880" stroke="#d8d8d8" stroke-width="1" fill="none"/></svg></div>
<div class="a" style="left:2px;top:120px;width:43px;height:147px;background:#111;border-radius:4px"></div>
<div class="a" style="left:16px;top:126px;width:16px;height:1px;background:#8a8a8a;"></div>
<div class="a" style="left:16px;top:129.5px;width:16px;height:1px;background:#8a8a8a;"></div>
<div class="a" style="left:5px;top:138px;width:37px;height:20px;background:#585858;border-radius:3px 3px 0 0"></div>
<div class="a" style="left:5px;top:159px;width:37px;height:20px;background:#46607c;border-radius:0"></div>
<div class="a" style="left:5px;top:180px;width:37px;height:20px;background:#585858;border-radius:0"></div>
<div class="a" style="left:5px;top:201px;width:37px;height:20px;background:#585858;border-radius:0"></div>
<div class="a" style="left:5px;top:222px;width:37px;height:20px;background:#585858;border-radius:0"></div>
<div class="a" style="left:5px;top:243px;width:37px;height:20px;background:#585858;border-radius:0 0 3px 3px"></div>
<svg class="a" style="left:16.6px;top:140.2px" width="14.8" height="15" viewBox="0.6 0.4 13 14.4" preserveAspectRatio="none"><path d="M4.2 14.6 C3.2 12.4 1.6 10.6 0.9 8.8 C0.6 7.9 1.7 7.4 2.4 8.2 L3.8 9.9 L2.9 3.6 C2.8 2.6 4.2 2.4 4.4 3.4 L5.4 7.4 L5.5 1.6 C5.5 0.5 7.1 0.5 7.2 1.6 L7.6 7.2 L8.8 1.4 C9 0.4 10.5 0.7 10.4 1.7 L9.8 7.6 L11.8 3.4 C12.3 2.5 13.6 3.1 13.2 4.1 L11.6 9 C11.4 11 11.2 12.8 10.6 14.6 Z" fill="#d0d0d0"/></svg>
<svg class="a" style="left:16px;top:161px" width="16" height="16" viewBox="0 0 16 16"><g stroke="#e4e4e4" stroke-width="1.05" fill="none"><path d="M8 1.5 V6.2 M8 9.8 V14.5 M1.5 8 H6.2 M9.8 8 H14.5"/><path d="M5.8 3.4 L8 1.2 L10.2 3.4 M5.8 12.6 L8 14.8 L10.2 12.6 M3.4 5.8 L1.2 8 L3.4 10.2 M12.6 5.8 L14.8 8 L12.6 10.2"/></g></svg>
<svg class="a" style="left:16px;top:182px" width="16" height="16" viewBox="0 0 16 16"><g stroke="#d0d0d0" stroke-width="1.1" fill="none"><path d="M9.4 1.6 A6.6 6.6 0 0 1 9.6 14.3"/><path d="M6.6 14.4 A6.6 6.6 0 0 1 6.4 1.7"/><path d="M9.2 4.4 V1.4 H12.4"/><path d="M6.8 11.6 V14.6 H3.6"/></g></svg>
<svg class="a" style="left:16px;top:203px" width="16" height="16" viewBox="0 0 16 16"><g stroke="#d0d0d0" stroke-width="1.1" fill="none"><path d="M1.6 1.6 H14.4 V14.4 H1.6 Z"/><path d="M1.6 10.2 H5.8 V14.4"/><path d="M6.4 9.6 L11.8 4.2 M8 4.2 H11.8 V8"/></g></svg>
<svg class="a" style="left:16px;top:224px" width="16" height="16" viewBox="0 0 16 16"><g fill="#d0d0d0"><path d="M1 1h3v3h-3z M12 1h3v3h-3z M1 12h3v3h-3z M12 12h3v3h-3z"/></g><g stroke="#d0d0d0" stroke-width="1.1" fill="none"><path d="M5.6 2.5 H10.4 M5.6 13.5 H10.4 M2.5 5.6 V10.4 M13.5 5.6 V10.4"/></g></svg>
<svg class="a" style="left:16px;top:245px" width="16" height="16" viewBox="0 0 16 16"><g stroke="#d0d0d0" stroke-width="1" fill="none"><path d="M3.4 3.2 A6.6 6.6 0 0 1 12.8 3.4 M12.8 12.6 A6.6 6.6 0 0 1 3.4 12.8 M1.6 10 A6.6 6.6 0 0 1 1.6 6 M14.4 6 A6.6 6.6 0 0 1 14.4 10"/><path d="M8 3 V13 M3 8 H13"/><path d="M6.4 4.6 L8 3 L9.6 4.6 M6.4 11.4 L8 13 L9.6 11.4 M4.6 6.4 L3 8 L4.6 9.6 M11.4 6.4 L13 8 L11.4 9.6"/></g><path d="M12.2 0.2 H15.8 V3.8 Z M0.2 12.2 V15.8 H3.8 Z" fill="#d0d0d0"/></svg>
<div class="a" style="left:877px;top:92px;width:611px;height:20px;background:#3c3c3c;"></div>
<div class="a" style="left:877px;top:112px;width:611px;height:1px;background:#232323;"></div>
<div class="a" style="left:877px;top:113px;width:611px;height:519px;background:#383838;"></div>
<div class="a" style="left:877px;top:113px;width:32px;height:519px;background:#323232;"></div>
<svg class="a" style="left:884px;top:96px" width="12" height="12" viewBox="0 0 12 12"><path d="M6 0 V12 M0 6 H12" stroke="#d2d2d2" stroke-width="1.6" fill="none"/></svg>
<svg class="a" style="left:900.5px;top:100px" width="7.4" height="4.2" viewBox="0 0 7.4 4.2"><path d="M0 0 H7.4 L3.7 4.2 Z" fill="#c4c4c4"/></svg>
<div class="a" style="left:1159px;top:94px;width:326px;height:16px;background:#2a2a2a;border:1px solid #1f1f1f;border-radius:3px"></div>
<svg class="a" style="left:1164px;top:97px" width="12" height="10" viewBox="0 0 12 10"><circle cx="3.6" cy="3.8" r="2.6" stroke="#b0b0b0" stroke-width="1.3" fill="none"/><path d="M5.4 5.8 L8.4 9" stroke="#b0b0b0" stroke-width="1.5" fill="none"/><path d="M8 4 h3.4 l-1.7 2 Z" fill="#b0b0b0"/></svg>
<div class="t" style="left:1178.3px;top:94px;font-size:12.6px;letter-spacing:-0.252px;color:#6c6c6c">All</div>
<div class="a" style="left:1467px;top:95px;width:17px;height:14px;background:#353535;border-radius:0 2px 2px 0"></div>
<svg class="a" style="left:1469.5px;top:96px" width="12" height="12" viewBox="0 0 12 12"><g stroke="#c4c4c4" stroke-width="1" fill="none"><path d="M3.5 0.5 H11.5 V8.5 H3.5 Z"/><path d="M0.5 7.5 H4.5 V11.5 H0.5 Z" fill="#303030"/><path d="M5.6 6.4 L9.4 2.6 M6.4 2.5 H9.5 V5.6"/></g></svg>
<div class="a" style="left:877px;top:113px;width:611px;height:16px;background:#2c5d87;"></div>
<svg class="a" style="left:878px;top:115px" width="15" height="12" viewBox="0 0 15 12"><path d="M0.6 6 C3.4 1.4 11.6 1.4 14.4 6 C11.6 10.6 3.4 10.6 0.6 6 Z" stroke="#5580a8" stroke-width="1" fill="none"/><circle cx="7.5" cy="5.6" r="2.4" fill="#5580a8"/></svg>
<svg class="a" style="left:895.5px;top:114.5px" width="12" height="13" viewBox="0 0 12 13"><path d="M0.5 0.7 L1.9 0.3 L4.7 5 L5.6 4.2 L10.6 3.8 L11.5 5 V9 L10.4 10.8 L7 12.5 L5 10.7 L0.4 9 V7.6 L2.7 7.7 Z" fill="#5d87ad"/></svg>
<svg class="a" style="left:911px;top:118px" width="9" height="8" viewBox="0 0 9 8"><path d="M0 0.2 H9 L4.5 7.8 Z" fill="#6f8fae"/></svg>
<svg class="a" style="left:925px;top:114px" width="13" height="14" viewBox="0 0 13 14"><path d="M6.5 0.3 L12.4 3.6 V10.4 L6.5 13.7 L0.6 10.4 V3.6 Z" fill="#f4f4f4"/><path d="M6.5 1.6 L10 3.63 L6.5 5.6 L3 3.63 Z M1.75 5.6 L5.3 7.6 V11.7 L1.75 9.7 Z M11.25 5.6 L7.7 7.6 V11.7 L11.25 9.7 Z M5.9 0 H7.1 V2.4 H5.9 Z" fill="#2c5d87"/></svg>
<div class="t" style="left:942px;top:113px;font-size:12.6px;letter-spacing:0.659px;font-weight:bold;color:#fff">Character</div>
<svg class="a" style="left:1475px;top:116px" width="3" height="11" viewBox="0 0 3 11"><path d="M0.3 0.4h2.3v2.1h-2.3z M0.3 4.1h2.3v2.1h-2.3z M0.3 7.8h2.3v2.1h-2.3z" fill="#c4c4c4"/></svg>
<svg class="a" style="left:938px;top:129.5px" width="13.4" height="14.3"><use href="#cube" width="13.4" height="14.3"/></svg>
<div class="t" style="left:955.2px;top:129px;font-size:12.6px;letter-spacing:-0.112px;color:#c8c8c8">Main Camera</div>
<svg class="a" style="left:938px;top:145.5px" width="13.4" height="14.3"><use href="#cube" width="13.4" height="14.3"/></svg>
<div class="t" style="left:955.2px;top:145px;font-size:12.6px;letter-spacing:0.038px;color:#c8c8c8">SkyBackground</div>
<svg class="a" style="left:925px;top:166px" width="9" height="8" viewBox="0 0 9 8"><path d="M0 0.2 H9 L4.5 7.8 Z" fill="#6e6e6e"/></svg>
<svg class="a" style="left:938px;top:161.5px" width="13.4" height="14.3"><use href="#cube" width="13.4" height="14.3"/></svg>
<div class="t" style="left:955.2px;top:161px;font-size:12.6px;letter-spacing:-0.104px;color:#c8c8c8">Canvas</div>
<svg class="a" style="left:939px;top:182px" width="9" height="8" viewBox="0 0 9 8"><path d="M0 0.2 H9 L4.5 7.8 Z" fill="#6e6e6e"/></svg>
<svg class="a" style="left:952px;top:177.5px" width="13.4" height="14.3"><use href="#cube" width="13.4" height="14.3"/></svg>
<div class="t" style="left:969.2px;top:177px;font-size:12.6px;letter-spacing:-0.106px;color:#c8c8c8">Blue</div>
<svg class="a" style="left:966px;top:193.5px" width="13.4" height="14.3"><use href="#cube" width="13.4" height="14.3"/></svg>
<div class="t" style="left:983.2px;top:193px;font-size:12.6px;letter-spacing:0.201px;color:#c8c8c8">Text (TMP)</div>
<svg class="a" style="left:939px;top:214px" width="9" height="8" viewBox="0 0 9 8"><path d="M0 0.2 H9 L4.5 7.8 Z" fill="#6e6e6e"/></svg>
<svg class="a" style="left:952px;top:209.5px" width="13.4" height="14.3"><use href="#cube" width="13.4" height="14.3"/></svg>
<div class="t" style="left:969.2px;top:209px;font-size:12.6px;letter-spacing:-0.037px;color:#c8c8c8">Pink</div>
<svg class="a" style="left:966px;top:225.5px" width="13.4" height="14.3"><use href="#cube" width="13.4" height="14.3"/></svg>
<div class="t" style="left:983.2px;top:225px;font-size:12.6px;letter-spacing:0.201px;color:#c8c8c8">Text (TMP)</div>
<svg class="a" style="left:939px;top:246px" width="9" height="8" viewBox="0 0 9 8"><path d="M0 0.2 H9 L4.5 7.8 Z" fill="#6e6e6e"/></svg>
<svg class="a" style="left:952px;top:241.5px" width="13.4" height="14.3"><use href="#cube" width="13.4" height="14.3"/></svg>
<div class="t" style="left:969.2px;top:241px;font-size:12.6px;letter-spacing:0.396px;color:#c8c8c8">Torna</div>
<svg class="a" style="left:966px;top:257.5px" width="13.4" height="14.3"><use href="#cube" width="13.4" height="14.3"/></svg>
<div class="t" style="left:983.2px;top:257px;font-size:12.6px;letter-spacing:0.201px;color:#c8c8c8">Text (TMP)</div>
<svg class="a" style="left:938px;top:273.5px" width="13.4" height="14.3"><use href="#cube" width="13.4" height="14.3"/></svg>
<div class="t" style="left:955.2px;top:273px;font-size:12.6px;letter-spacing:0.047px;color:#c8c8c8">EventSystem</div>
<svg class="a" style="left:8px;top:638px" width="10" height="11" viewBox="0 0 10 11"><path d="M0.3 0.3 H9.7 V10.7 H0.3 Z" fill="#c4c4c4"/><path d="M1.8 2.6 H8.2 M1.8 4.6 H8.2 M1.8 6.6 H8.2 M1.8 8.6 H8.2" stroke="#282828" stroke-width="0.9" fill="none"/></svg>
<div class="t" style="left:23.2px;top:637px;font-size:12.6px;letter-spacing:0.029px;">Console</div>
<div class="a" style="left:88.5px;top:634px;width:73.5px;height:19px;background:#3c3c3c;border-radius:3px 3px 0 0"></div>
<svg class="a" style="left:94px;top:640px" width="14" height="8" viewBox="0 0 14 8"><path d="M3.6 0.4 H10.4 C14.6 0.4 14.6 7.6 10.6 7.6 C9.4 7.6 8.8 6.2 7.8 6.2 H6.2 C5.2 6.2 4.6 7.6 3.4 7.6 C-0.6 7.6 -0.6 0.4 3.6 0.4 Z" fill="#c4c4c4"/><path d="M2.2 3.9 H5.2 M3.7 2.4 V5.4" stroke="#3c3c3c" stroke-width="1" fill="none"/><circle cx="10" cy="3" r="0.8" fill="#3c3c3c"/><circle cx="11.4" cy="4.8" r="0.8" fill="#3c3c3c"/></svg>
<div class="t" style="left:111.3px;top:637px;font-size:12.6px;letter-spacing:-0.403px;">Game</div>
<svg class="a" style="left:171px;top:637.5px" width="12" height="12" viewBox="0 0 12 12"><circle cx="6" cy="6" r="5.9" fill="#c4c4c4"/><path d="M6 1.6 V6.4 H10" stroke="#282828" stroke-width="1.3" fill="none"/></svg>
<div class="t" style="left:187.3px;top:637px;font-size:12.6px;letter-spacing:0.084px;">Animation</div>
<svg class="a" style="left:861px;top:638px" width="3" height="11" viewBox="0 0 3 11"><path d="M0.3 0.4h2.3v2.1h-2.3z M0.3 4.1h2.3v2.1h-2.3z M0.3 7.8h2.3v2.1h-2.3z" fill="#c4c4c4"/></svg>
<div class="a" style="left:0px;top:653px;width:875px;height:20px;background:#3c3c3c;"></div>
<div class="a" style="left:0px;top:673px;width:875px;height:1px;background:#1f1f1f;"></div>
<div class="a" style="left:90px;top:653px;width:1px;height:20px;background:#2a2a2a;"></div>
<div class="a" style="left:176px;top:653px;width:1px;height:20px;background:#2a2a2a;"></div>
<div class="a" style="left:336px;top:653px;width:1px;height:20px;background:#2a2a2a;"></div>
<div class="a" style="left:577px;top:653px;width:1px;height:20px;background:#2a2a2a;"></div>
<div class="a" style="left:687px;top:653px;width:1px;height:20px;background:#2a2a2a;"></div>
<div class="a" style="left:713px;top:653px;width:1px;height:20px;background:#2a2a2a;"></div>
<div class="a" style="left:739px;top:653px;width:1px;height:20px;background:#2a2a2a;"></div>
<div class="a" style="left:765px;top:653px;width:1px;height:20px;background:#2a2a2a;"></div>
<div class="a" style="left:805px;top:653px;width:1px;height:20px;background:#2a2a2a;"></div>
<div class="a" style="left:857px;top:657px;width:1px;height:12px;background:#2a2a2a;"></div>
<div class="t" style="left:4.3px;top:656px;font-size:12.6px;letter-spacing:-0.236px;">Game</div>
<svg class="a" style="left:78.2px;top:661.5px" width="7.4" height="4.2" viewBox="0 0 7.4 4.2"><path d="M0 0 H7.4 L3.7 4.2 Z" fill="#c4c4c4"/></svg>
<div class="t" style="left:100.5px;top:656px;font-size:12.6px;letter-spacing:-0.202px;">Display 1</div>
<svg class="a" style="left:164px;top:661.5px" width="7.6" height="4.2" viewBox="0 0 7.6 4.2"><path d="M0 0 H7.6 L3.8 4.2 Z" fill="#c4c4c4"/></svg>
<div class="t" style="left:180.4px;top:656px;font-size:12.6px;letter-spacing:0.127px;">Free Aspect</div>
<svg class="a" style="left:324px;top:661.5px" width="7.6" height="4.2" viewBox="0 0 7.6 4.2"><path d="M0 0 H7.6 L3.8 4.2 Z" fill="#c4c4c4"/></svg>
<div class="t" style="left:343px;top:656px;font-size:12.6px;letter-spacing:0.046px;">Scale</div>
<div class="a" style="left:385px;top:663px;width:146px;height:2px;background:#606060;"></div>
<div class="a" style="left:380.7px;top:659px;width:10px;height:10px;background:#999;border-radius:5px"></div>
<div class="t" style="left:536.3px;top:656px;font-size:12.6px;letter-spacing:-1.207px;">1x</div>
<div class="t" style="left:581.3px;top:656px;font-size:12.6px;letter-spacing:-0.039px;">Play Focused</div>
<svg class="a" style="left:675.3px;top:661.5px" width="7.4" height="4.2" viewBox="0 0 7.4 4.2"><path d="M0 0 H7.4 L3.7 4.2 Z" fill="#c4c4c4"/></svg>
<svg class="a" style="left:693px;top:656px" width="14" height="14" viewBox="0 0 14 14"><g stroke="#c4c4c4" stroke-width="1.3" fill="none"><path d="M2.6 1 L5 3.6 M11.4 1 L9 3.6 M0.2 7.4 H3.4 M10.6 7.4 H13.8 M0.8 12.8 L3.6 10.2 M13.2 12.8 L10.4 10.2"/></g><path d="M4.4 3.6 C4.8 0.8 9.2 0.8 9.6 3.6 Z" fill="#c4c4c4"/><path d="M2.8 4.4 H11.2 V9.6 C11.2 14.4 2.8 14.4 2.8 9.6 Z" fill="#c4c4c4"/><path d="M4.6 6.2 H9.4 V10 H4.6 Z" fill="#3c3c3c"/><path d="M5.6 7.2 H8.4 V9 H5.6 Z" fill="#c4c4c4"/></svg>
<svg class="a" style="left:719.5px;top:657px" width="13" height="12" viewBox="0 0 13 12"><path d="M0.4 3.6 H2.6 V8.4 H0.4 Z M3.4 3.6 L6.4 0.8 V11.2 L3.4 8.4 Z" fill="#c4c4c4"/><path d="M8 4 C9 5 9 7 8 8 M9.8 2.2 C11.8 4.2 11.8 7.8 9.8 9.8" stroke="#c4c4c4" stroke-width="1.1" fill="none"/></svg>
<svg class="a" style="left:745px;top:658px" width="14" height="10" viewBox="0 0 14 10"><path d="M0.2 0.2 H13.8 V9.8 H0.2 Z" fill="#c4c4c4"/><path d="M1.4 1.4 h1.7 v1.7 h-1.7 Z M4 1.4 h1.7 v1.7 h-1.7 Z M6.6 1.4 h1.7 v1.7 h-1.7 Z M9.2 1.4 h1.7 v1.7 h-1.7 Z M11.7 1.4 h1 v1.7 h-1 Z M1.4 4.1 h1.7 v1.7 h-1.7 Z M4 4.1 h1.7 v1.7 h-1.7 Z M6.6 4.1 h1.7 v1.7 h-1.7 Z M9.2 4.1 h1.7 v1.7 h-1.7 Z M11.7 4.1 h1 v1.7 h-1 Z M1.4 6.9 h1.7 v1.7 h-1.7 Z M4 6.9 h6.9 v1.7 h-6.9 Z M11.7 6.9 h1 v1.7 h-1 Z" fill="#3c3c3c"/></svg>
<div class="t" style="left:771.3px;top:656px;font-size:12.6px;letter-spacing:0.247px;">Stats</div>
<div class="t" style="left:809.5px;top:656px;font-size:12.6px;letter-spacing:-0.1px;">Gizmos</div>
<svg class="a" style="left:862.3px;top:661.5px" width="7.6" height="4.2" viewBox="0 0 7.6 4.2"><path d="M0 0 H7.6 L3.8 4.2 Z" fill="#c4c4c4"/></svg>
<div class="a" style="left:0;top:674px;width:875px;height:344px;overflow:hidden;background:radial-gradient(ellipse 260px 130px at 330px 330px,rgba(200,249,254,0.85),rgba(200,249,254,0) 100%),radial-gradient(ellipse 360px 200px at 90px 70px,rgba(196,248,254,0.9),rgba(196,248,254,0) 100%),radial-gradient(ellipse 260px 200px at 560px 60px,rgba(190,246,253,0.8),rgba(190,246,253,0) 100%),radial-gradient(ellipse 220px 160px at 760px 260px,rgba(165,239,251,0.8),rgba(165,239,251,0) 100%),linear-gradient(100deg,#b2f3fc 0%,#aef2fc 55%,#a3eefb 100%)"></div>
<svg class="a" style="left:168px;top:789px" width="149.3" height="160"><use href="#blob-b" width="149.3" height="160"/></svg>
<svg class="a" style="left:566px;top:789px" width="149.3" height="160"><use href="#blob-p" width="149.3" height="160"/></svg>
<div class="clica" style="left:168px;top:878px;width:149px;font-size:24.4px;line-height:28px">Clica</div>
<div class="clica" style="left:566px;top:878px;width:149px;font-size:24.4px;line-height:28px">Clica</div>
<div class="torna" style="left:358px;top:852px;width:159px;height:27.5px;border-radius:3px;font-size:24.4px;line-height:27px;border:1px solid #c9d3d5;color:#444">Torna</div>
<div class="a" style="left:877px;top:634px;width:81px;height:19px;background:#3c3c3c;border-radius:3px 3px 0 0"></div>
<svg class="a" style="left:885px;top:638.5px" width="13" height="11"><use href="#fold-c"/></svg>
<div class="t" style="left:901.3px;top:637px;font-size:12.6px;letter-spacing:0.198px;">Project</div>
<svg class="a" style="left:1453.3px;top:637.3px" width="10" height="11" viewBox="0 0 10 11"><path d="M1 5.5 H8.5 V10 H1 Z" stroke="#c4c4c4" stroke-width="1.2" fill="none"/><path d="M2.6 5.2 V3.2 C2.6 0.6 7 0.6 7 3.2" stroke="#c4c4c4" stroke-width="1.2" fill="none"/></svg>
<svg class="a" style="left:1473.8px;top:638px" width="3" height="11" viewBox="0 0 3 11"><path d="M0.3 0.4h2.3v2.1h-2.3z M0.3 4.1h2.3v2.1h-2.3z M0.3 7.8h2.3v2.1h-2.3z" fill="#c4c4c4"/></svg>
<div class="a" style="left:877px;top:653px;width:611px;height:20px;background:#3c3c3c;"></div>
<div class="a" style="left:877px;top:673px;width:611px;height:345px;background:#383838;"></div>
<svg class="a" style="left:884px;top:657px" width="12" height="12" viewBox="0 0 12 12"><path d="M6 0 V12 M0 6 H12" stroke="#d2d2d2" stroke-width="1.6" fill="none"/></svg>
<svg class="a" style="left:900.3px;top:661px" width="7.4" height="4.2" viewBox="0 0 7.4 4.2"><path d="M0 0 H7.4 L3.7 4.2 Z" fill="#c4c4c4"/></svg>
<div class="a" style="left:1025px;top:655px;width:318px;height:16px;background:#2a2a2a;border:1px solid #1f1f1f;border-radius:3px"></div>
<svg class="a" style="left:1030px;top:658.5px" width="9" height="10" viewBox="0 0 9 10"><circle cx="3.4" cy="3.6" r="2.5" stroke="#b0b0b0" stroke-width="1.3" fill="none"/><path d="M5.2 5.6 L8 8.6" stroke="#b0b0b0" stroke-width="1.5" fill="none"/></svg>
<div class="a" style="left:1325px;top:656px;width:17px;height:14px;background:#353535;border-radius:0 2px 2px 0"></div>
<svg class="a" style="left:1327.5px;top:657px" width="12" height="12" viewBox="0 0 12 12"><g stroke="#c4c4c4" stroke-width="1" fill="none"><path d="M3.5 0.5 H11.5 V8.5 H3.5 Z"/><path d="M0.5 7.5 H4.5 V11.5 H0.5 Z" fill="#303030"/><path d="M5.6 6.4 L9.4 2.6 M6.4 2.5 H9.5 V5.6"/></g></svg>
<div class="a" style="left:1346px;top:653px;width:1px;height:20px;background:#2a2a2a;"></div>
<div class="a" style="left:1372px;top:653px;width:1px;height:20px;background:#2a2a2a;"></div>
<div class="a" style="left:1398px;top:653px;width:1px;height:20px;background:#2a2a2a;"></div>
<div class="a" style="left:1424px;top:653px;width:1px;height:20px;background:#2a2a2a;"></div>
<div class="a" style="left:1450px;top:653px;width:1px;height:20px;background:#2a2a2a;"></div>
<svg class="a" style="left:1352px;top:656.5px" width="14" height="14" viewBox="0 0 14 14"><path d="M1.8 0.4 H7 V5 H1.8 Z" fill="#c4c4c4"/><circle cx="4" cy="9.8" r="3.4" fill="#c4c4c4"/><path d="M9.6 3.4 L13.4 10 H6.6 Z" fill="#c4c4c4" stroke="#3c3c3c" stroke-width="0.6"/></svg>
<svg class="a" style="left:1378px;top:657.5px" width="12" height="11" viewBox="0 0 12 11"><path d="M4.6 0.6 L9.6 0.4 L11.4 2.2 L11.2 5.6 L6 10.6 L0.8 5.4 Z" fill="#c4c4c4" transform="rotate(8 6 5.5)"/><circle cx="8.8" cy="2.9" r="1" fill="#3c3c3c"/></svg>
<svg class="a" style="left:1403px;top:656.5px" width="14" height="14" viewBox="0 0 14 14"><path d="M4.2 0.4 H9.8 L13.6 4.2 V9.8 L9.8 13.6 H4.2 L0.4 9.8 V4.2 Z" fill="#c4c4c4"/><path d="M6.1 2.6 H7.9 L7.6 8.4 H6.4 Z M6.1 9.6 H7.9 V11.4 H6.1 Z" fill="#3c3c3c"/></svg>
<svg class="a" style="left:1430px;top:657px" width="12" height="12" viewBox="0 0 12 12"><path d="M6 0.4 L7.7 4.2 L11.8 4.6 L8.7 7.3 L9.6 11.4 L6 9.2 L2.4 11.4 L3.3 7.3 L0.2 4.6 L4.3 4.2 Z" fill="#8a8a8a"/></svg>
<svg class="a" style="left:1455.5px;top:657px" width="15" height="12" viewBox="0 0 15 12"><g stroke="#c4c4c4" stroke-width="1.1" fill="none"><path d="M1 6 C3.4 1.8 10.6 1.8 13.4 6 C10.6 10.2 3.4 10.2 1 6 Z"/><path d="M5.4 7.6 C6.6 8.6 8.8 7.8 9 5.6"/><path d="M12.2 0.6 L1.4 11.2" stroke-width="1.3"/></g></svg>
<div class="t" style="left:1471.3px;top:656px;font-size:12.6px;letter-spacing:0.086px;">21</div>
<div class="a" style="left:1072px;top:673px;width:13px;height:345px;background:#353535;"></div>
<div class="a" style="left:1085px;top:673px;width:1px;height:345px;background:#232323;"></div>
<div class="a" style="left:877px;top:1002px;width:195px;height:16px;background:#4d4d4d;"></div>
<div class="a" style="left:877px;top:673px;width:195px;height:345px;overflow:hidden">
<svg class="a" style="left:33px;top:-2px" width="9" height="8" viewBox="0 0 9 8"><path d="M0 0.2 H9 L4.5 7.8 Z" fill="#6e6e6e"/></svg>
<svg class="a" style="left:46px;top:-4.5px" width="14" height="11"><use href="#fold-o"/></svg>
<div class="t" style="left:62px;top:-7px;font-size:12.6px;letter-spacing:-0.067px;color:#c8c8c8">2D Mega Pack</div>
<svg class="a" style="left:60px;top:11.5px" width="13" height="11"><use href="#fold-c"/></svg>
<div class="t" style="left:76px;top:9px;font-size:12.6px;letter-spacing:0.177px;color:#c8c8c8">-- Example Photos --</div>
<svg class="a" style="left:60px;top:27.5px" width="13" height="11"><use href="#fold-c"/></svg>
<div class="t" style="left:76px;top:25px;font-size:12.6px;letter-spacing:0.111px;color:#c8c8c8">Backgrounds</div>
<svg class="a" style="left:47px;top:46px" width="9" height="8" viewBox="0 0 9 8"><path d="M0 0.2 H9 L4.5 7.8 Z" fill="#6e6e6e"/></svg>
<svg class="a" style="left:60px;top:43.5px" width="14" height="11"><use href="#fold-o"/></svg>
<div class="t" style="left:76px;top:41px;font-size:12.6px;letter-spacing:0.115px;color:#c8c8c8">Characters</div>
<svg class="a" style="left:61px;top:62px" width="9" height="8" viewBox="0 0 9 8"><path d="M0 0.2 H9 L4.5 7.8 Z" fill="#6e6e6e"/></svg>
<svg class="a" style="left:74px;top:59.5px" width="14" height="11"><use href="#fold-o"/></svg>
<div class="t" style="left:90px;top:57px;font-size:12.6px;letter-spacing:0.047px;color:#c8c8c8">Animation</div>
<svg class="a" style="left:88px;top:75.5px" width="13" height="11"><use href="#fold-c"/></svg>
<div class="t" style="left:104px;top:73px;font-size:12.6px;letter-spacing:0.246px;color:#c8c8c8">Astronaut</div>
<svg class="a" style="left:88px;top:91.5px" width="13" height="11"><use href="#fold-c"/></svg>
<div class="t" style="left:104px;top:89px;font-size:12.6px;letter-spacing:0.266px;color:#c8c8c8">Detective</div>
<svg class="a" style="left:61px;top:110px" width="9" height="8" viewBox="0 0 9 8"><path d="M0 0.2 H9 L4.5 7.8 Z" fill="#6e6e6e"/></svg>
<svg class="a" style="left:74px;top:107.5px" width="14" height="11"><use href="#fold-o"/></svg>
<div class="t" style="left:90px;top:105px;font-size:12.6px;letter-spacing:-0.03px;color:#c8c8c8">Blob Players</div>
<svg class="a" style="left:88px;top:123.5px" width="13" height="11"><use href="#fold-c"/></svg>
<div class="t" style="left:104px;top:121px;font-size:12.6px;letter-spacing:0.078px;color:#c8c8c8">Animation</div>
<svg class="a" style="left:74px;top:139.5px" width="13" height="11"><use href="#fold-c"/></svg>
<div class="t" style="left:90px;top:137px;font-size:12.6px;letter-spacing:-0.028px;color:#c8c8c8">Fantasy</div>
<svg class="a" style="left:61.5px;top:157px" width="8" height="9" viewBox="0 0 8 9"><path d="M0.2 0 V9 L7.8 4.5 Z" fill="#6e6e6e"/></svg>
<svg class="a" style="left:74px;top:155.5px" width="13" height="11"><use href="#fold-c"/></svg>
<div class="t" style="left:90px;top:153px;font-size:12.6px;letter-spacing:-0.017px;color:#c8c8c8">Soldiers</div>
<svg class="a" style="left:74px;top:171.5px" width="13" height="11"><use href="#fold-c"/></svg>
<div class="t" style="left:90px;top:169px;font-size:12.6px;letter-spacing:0.119px;color:#c8c8c8">Stickman</div>
<svg class="a" style="left:47.5px;top:189px" width="8" height="9" viewBox="0 0 8 9"><path d="M0.2 0 V9 L7.8 4.5 Z" fill="#6e6e6e"/></svg>
<svg class="a" style="left:60px;top:187.5px" width="13" height="11"><use href="#fold-c"/></svg>
<div class="t" style="left:76px;top:185px;font-size:12.6px;letter-spacing:0.394px;color:#c8c8c8">Effects</div>
<svg class="a" style="left:47.5px;top:205px" width="8" height="9" viewBox="0 0 8 9"><path d="M0.2 0 V9 L7.8 4.5 Z" fill="#6e6e6e"/></svg>
<svg class="a" style="left:60px;top:203.5px" width="13" height="11"><use href="#fold-c"/></svg>
<div class="t" style="left:76px;top:201px;font-size:12.6px;letter-spacing:-0.145px;color:#c8c8c8">Enemies</div>
<svg class="a" style="left:47.5px;top:221px" width="8" height="9" viewBox="0 0 8 9"><path d="M0.2 0 V9 L7.8 4.5 Z" fill="#6e6e6e"/></svg>
<svg class="a" style="left:60px;top:219.5px" width="13" height="11"><use href="#fold-c"/></svg>
<div class="t" style="left:76px;top:217px;font-size:12.6px;letter-spacing:0.067px;color:#c8c8c8">Environment</div>
<svg class="a" style="left:60px;top:235.5px" width="13" height="11"><use href="#fold-c"/></svg>
<div class="t" style="left:76px;top:233px;font-size:12.6px;letter-spacing:-0.002px;color:#c8c8c8">Extra</div>
<svg class="a" style="left:47.5px;top:253px" width="8" height="9" viewBox="0 0 8 9"><path d="M0.2 0 V9 L7.8 4.5 Z" fill="#6e6e6e"/></svg>
<svg class="a" style="left:60px;top:251.5px" width="13" height="11"><use href="#fold-c"/></svg>
<div class="t" style="left:76px;top:249px;font-size:12.6px;letter-spacing:-0.062px;color:#c8c8c8">Food &amp; Plants</div>
<svg class="a" style="left:47.5px;top:269px" width="8" height="9" viewBox="0 0 8 9"><path d="M0.2 0 V9 L7.8 4.5 Z" fill="#6e6e6e"/></svg>
<svg class="a" style="left:60px;top:267.5px" width="13" height="11"><use href="#fold-c"/></svg>
<div class="t" style="left:76px;top:265px;font-size:12.6px;letter-spacing:0.006px;color:#c8c8c8">Items &amp; Icons</div>
<svg class="a" style="left:60px;top:283.5px" width="13" height="11"><use href="#fold-c"/></svg>
<div class="t" style="left:76px;top:281px;font-size:12.6px;letter-spacing:0.18px;color:#c8c8c8">Platforms</div>
<svg class="a" style="left:60px;top:299.5px" width="13" height="11"><use href="#fold-c"/></svg>
<div class="t" style="left:76px;top:297px;font-size:12.6px;letter-spacing:-0.116px;color:#c8c8c8">Shapes</div>
<svg class="a" style="left:60px;top:315.5px" width="13" height="11"><use href="#fold-c"/></svg>
<div class="t" style="left:76px;top:313px;font-size:12.6px;letter-spacing:-0.016px;color:#c8c8c8">Sounds</div>
<svg class="a" style="left:47.5px;top:333px" width="8" height="9" viewBox="0 0 8 9"><path d="M0.2 0 V9 L7.8 4.5 Z" fill="#6e6e6e"/></svg>
<svg class="a" style="left:60px;top:331.5px" width="13" height="11"><use href="#fold-c"/></svg>
<div class="t" style="left:76px;top:329px;font-size:12.6px;letter-spacing:-0.45px;color:#c8c8c8">UI</div>
</div>
<svg class="a" style="left:1074.5px;top:680.5px" width="8" height="5" viewBox="0 0 8 5"><path d="M0 5 H8 L4 0 Z" fill="#c4c4c4"/></svg>
<svg class="a" style="left:1074.5px;top:1007.5px" width="8" height="5" viewBox="0 0 8 5"><path d="M0 0 H8 L4 5 Z" fill="#c4c4c4"/></svg>
<div class="a" style="left:1074px;top:744px;width:10px;height:170px;background:#5f5f5f;border-radius:5px"></div>
<div class="a" style="left:1086px;top:673px;width:402px;height:345px;background:#333;"></div>
<div class="a" style="left:1086px;top:673px;width:402px;height:22px;background:#3f3f3f;"></div>
<div class="a" style="left:1086px;top:996px;width:402px;height:22px;background:#3f3f3f;"></div>
<div class="t" style="left:1090.5px;top:676px;font-size:12.6px;letter-spacing:0.118px;color:#bdbdbd">Assets</div>
<div class="t" style="left:1147.5px;top:676px;font-size:12.6px;letter-spacing:0.055px;color:#bdbdbd">Brackeys</div>
<div class="t" style="left:1217.5px;top:676px;font-size:12.6px;letter-spacing:-0.039px;color:#bdbdbd">2D Mega Pack</div>
<svg class="a" style="left:1136.5px;top:680px" width="6" height="9" viewBox="0 0 6 9"><path d="M0.8 0.6 L4.8 4.5 L0.8 8.4" stroke="#bdbdbd" stroke-width="1.2" fill="none"/></svg>
<svg class="a" style="left:1206.5px;top:680px" width="6" height="9" viewBox="0 0 6 9"><path d="M0.8 0.6 L4.8 4.5 L0.8 8.4" stroke="#bdbdbd" stroke-width="1.2" fill="none"/></svg>
<svg class="a" style="left:1306.5px;top:680px" width="6" height="9" viewBox="0 0 6 9"><path d="M0.8 0.6 L4.8 4.5 L0.8 8.4" stroke="#bdbdbd" stroke-width="1.2" fill="none"/></svg>
<div class="t" style="left:1318px;top:676px;font-size:12.6px;letter-spacing:1.1px;font-weight:bold;color:#c8c8c8">UI</div>
<div class="t" style="left:1120.5px;top:696px;font-size:12.6px;letter-spacing:0.633px;color:#c8c8c8">Cursors</div>
<svg class="a" style="left:1089px;top:715px" width="8" height="9" viewBox="0 0 8 9"><path d="M0.2 0 V9 L7.8 4.5 Z" fill="#6e6e6e"/></svg>
<div class="t" style="left:1120.5px;top:712px;font-size:12.6px;letter-spacing:0.937px;color:#c8c8c8">Arrow</div>
<svg class="a" style="left:1089px;top:731px" width="8" height="9" viewBox="0 0 8 9"><path d="M0.2 0 V9 L7.8 4.5 Z" fill="#6e6e6e"/></svg>
<div class="t" style="left:1120.5px;top:728px;font-size:12.6px;letter-spacing:0.56px;color:#c8c8c8">Dialogue</div>
<svg class="a" style="left:1089px;top:747px" width="8" height="9" viewBox="0 0 8 9"><path d="M0.2 0 V9 L7.8 4.5 Z" fill="#6e6e6e"/></svg>
<div class="t" style="left:1120.5px;top:744px;font-size:12.6px;letter-spacing:0.687px;color:#c8c8c8">IconBox</div>
<svg class="a" style="left:1089px;top:763px" width="8" height="9" viewBox="0 0 8 9"><path d="M0.2 0 V9 L7.8 4.5 Z" fill="#6e6e6e"/></svg>
<div class="t" style="left:1120.5px;top:760px;font-size:12.6px;letter-spacing:0.625px;color:#c8c8c8">ItemFrame</div>
<svg class="a" style="left:1089px;top:779px" width="8" height="9" viewBox="0 0 8 9"><path d="M0.2 0 V9 L7.8 4.5 Z" fill="#6e6e6e"/></svg>
<div class="t" style="left:1120.5px;top:776px;font-size:12.6px;letter-spacing:0.523px;color:#c8c8c8">ItemPoolFrame</div>
<svg class="a" style="left:1089px;top:795px" width="8" height="9" viewBox="0 0 8 9"><path d="M0.2 0 V9 L7.8 4.5 Z" fill="#6e6e6e"/></svg>
<div class="t" style="left:1120.5px;top:792px;font-size:12.6px;letter-spacing:0.481px;color:#c8c8c8">Panel</div>
<svg class="a" style="left:1089px;top:811px" width="8" height="9" viewBox="0 0 8 9"><path d="M0.2 0 V9 L7.8 4.5 Z" fill="#6e6e6e"/></svg>
<div class="t" style="left:1120.5px;top:808px;font-size:12.6px;letter-spacing:0.653px;color:#c8c8c8">SpeechBubble</div>
<svg class="a" style="left:1104px;top:697.5px" width="13" height="11"><use href="#fold-c"/></svg>
<svg class="a" style="left:1103px;top:712px" width="14" height="15" viewBox="0 0 14 15"><path d="M5 0.4 H9 V7.6 H13 L7 14.6 L1 7.6 H5 Z" fill="#fff"/></svg>
<svg class="a" style="left:1103.5px;top:729px" width="13" height="12" viewBox="0 0 13 12"><path d="M1.6 0.4 H11.4 C12.2 0.4 12.6 0.8 12.6 1.6 V7.6 C12.6 8.4 12.2 8.8 11.4 8.8 H6.4 L4.4 10.8 V8.8 H1.6 C0.8 8.8 0.4 8.4 0.4 7.6 V1.6 C0.4 0.8 0.8 0.4 1.6 0.4 Z" fill="#f4f4f4" stroke="#222" stroke-width="0.8"/></svg>
<svg class="a" style="left:1104px;top:744.5px" width="12" height="14" viewBox="0 0 12 14"><path d="M0.6 0.6 H11.4 V9.4 L6 13.4 L0.6 9.4 Z" fill="#e8e8e8" stroke="#222" stroke-width="0.8"/></svg>
<div class="a" style="left:1102.5px;top:759.5px;width:15px;height:15px;background:transparent;border:1px dotted #222"></div>
<div class="a" style="left:1102.5px;top:797px;width:15px;height:3px;background:#fff;"></div>
<svg class="a" style="left:1102px;top:807px" width="16" height="16" viewBox="0 0 16 16"><path d="M8 0.6 C12.4 0.6 15.4 3.4 15.4 7 C15.4 10.6 12.4 13.2 8.6 13.4 L7.4 15.2 L6.2 13.2 C2.8 12.6 0.6 10 0.6 7 C0.6 3.4 3.6 0.6 8 0.6 Z" fill="#eefcff"/></svg>
<div class="a" style="left:1422px;top:1007px;width:50px;height:2px;background:#606060;"></div>
<div class="a" style="left:1417px;top:1003px;width:10px;height:10px;background:#999;border-radius:5px"></div>
<div class="a" style="left:0px;top:1018px;width:1920px;height:22px;background:#191919;"></div>
<svg class="a" style="left:3px;top:1022px" width="13" height="14" viewBox="0 0 13 14"><path d="M6.5 0.4 C10 0.4 12.6 3 12.6 6.2 C12.6 9.4 10 12 6.5 12 C6 12 5.4 11.9 4.9 11.8 L1.6 13.4 L2.4 10.4 C1.2 9.4 0.4 7.9 0.4 6.2 C0.4 3 3 0.4 6.5 0.4 Z" fill="#e6e6e6"/><path d="M5.6 2.4 H7.4 L7.1 7.6 H5.9 Z M5.6 8.6 H7.4 V10.2 H5.6 Z" fill="#191919"/></svg>
<div class="t" style="left:20.8px;top:1022px;font-size:12.6px;letter-spacing:0.028px;color:#c4c4c4">[TMP Essential Resources] have been imported.</div>
<div class="a" style="left:1815px;top:1019px;width:1px;height:21px;background:#232323;"></div>
<div class="a" style="left:1841px;top:1019px;width:1px;height:21px;background:#232323;"></div>
<div class="a" style="left:1867px;top:1019px;width:1px;height:21px;background:#232323;"></div>
<div class="a" style="left:1893px;top:1019px;width:1px;height:21px;background:#232323;"></div>
<svg class="a" style="left:1821px;top:1023px" width="14" height="14" viewBox="0 0 14 14"><g stroke="#c4c4c4" stroke-width="1.3" fill="none"><path d="M2.6 1 L5 3.6 M11.4 1 L9 3.6 M0.2 7.4 H3.4 M10.6 7.4 H13.8 M0.8 12.8 L3.6 10.2 M13.2 12.8 L10.4 10.2"/></g><path d="M4.4 3.6 C4.8 0.8 9.2 0.8 9.6 3.6 Z" fill="#c4c4c4"/><path d="M2.8 4.4 H11.2 V9.6 C11.2 14.4 2.8 14.4 2.8 9.6 Z" fill="#c4c4c4"/><path d="M0.6 0.4 L13.6 13.8" stroke="#191919" stroke-width="2.2"/><path d="M0.6 0.4 L13.6 13.8" stroke="#c4c4c4" stroke-width="1.1"/></svg>
<svg class="a" style="left:1847.5px;top:1022.5px" width="14" height="15" viewBox="0 0 14 15"><path d="M0.6 3 C0.6 -0.4 12.6 -0.4 12.6 3 V4.6 C12.6 8 0.6 8 0.6 4.6 Z" fill="#c4c4c4"/><path d="M0.6 7.2 C2.6 9.6 10.6 9.6 12.6 7.2 V8.8 C12.6 12 0.6 12 0.6 8.8 Z" fill="#c4c4c4"/><path d="M0.6 11 C2.6 13.4 10.6 13.4 12.6 11 V12 C12.6 15.4 0.6 15.4 0.6 12 Z" fill="#c4c4c4"/><path d="M0.4 0.6 L13.6 14.4" stroke="#191919" stroke-width="2.2"/><path d="M0.4 0.6 L13.6 14.4" stroke="#c4c4c4" stroke-width="1.1"/></svg>
<svg class="a" style="left:1873px;top:1023px" width="15" height="14" viewBox="0 0 15 14"><g stroke="#c4c4c4" stroke-width="1.2" fill="none"><path d="M2 5.2 A5.8 5.8 0 0 1 12.6 4.4 M13 8.8 A5.8 5.8 0 0 1 2.4 9.6"/><path d="M3.4 7 C5 4.6 10 4.6 11.6 7 C10 9.4 5 9.4 3.4 7 Z"/></g><path d="M13.6 1.6 V5 H10.2 Z M1.4 12.4 V9 H4.8 Z" fill="#c4c4c4"/><circle cx="7.5" cy="7" r="1.3" fill="#c4c4c4"/><path d="M1.6 0.8 L13.6 13.4" stroke="#191919" stroke-width="2.2"/><path d="M1.6 0.8 L13.6 13.4" stroke="#c4c4c4" stroke-width="1.1"/></svg>
<svg class="a" style="left:1899px;top:1023px" width="14" height="14" viewBox="0 0 14 14"><circle cx="7" cy="7" r="6.2" stroke="#c4c4c4" stroke-width="1.1" fill="none"/><path d="M3.8 7.2 L6.2 9.6 L10.4 4.8" stroke="#c4c4c4" stroke-width="1.5" fill="none"/></svg>
</div><!--unity-->
<div class="a" style="left:0px;top:1040px;width:1920px;height:40px;background:#1c1c1c;"></div>
<svg class="a" style="left:16px;top:1052px" width="16" height="16" viewBox="0 0 16 16"><path d="M0 2.3 L6.6 1.4 V7.6 H0 Z M7.4 1.3 L16 0 V7.6 H7.4 Z M0 8.4 H6.6 V14.6 L0 13.7 Z M7.4 8.4 H16 V16 L7.4 14.7 Z" fill="#fff"/></svg>
<div class="a" style="left:48px;top:1040px;width:288px;height:40px;background:#2e2e2e;border:1px solid #4f4f4f;border-bottom:none"></div>
<svg class="a" style="left:59px;top:1051px" width="18" height="18" viewBox="0 0 18 18"><circle cx="10.6" cy="7" r="5.4" stroke="#fff" stroke-width="1.3" fill="none"/><path d="M6.8 10.8 L1 16.6" stroke="#fff" stroke-width="1.5" fill="none"/></svg>
<div class="tk" style="left:88.7px;top:1051px;font-size:15.4px;letter-spacing:-0.478px;">Escriu aquí per cercar</div>
<svg class="a" style="left:256px;top:1041px" width="80" height="39" viewBox="0 0 80 39"><path d="M0 39 L11 24.5 H72 L80 33 V39 Z" fill="#e3bb8b"/><path d="M0 39 L11 24.5 H72 L80 33" fill="none" stroke="#cfa472" stroke-width="0.6"/>
<g transform="rotate(-12 27 20)"><path d="M14 11 L27 13 L40 11 V29 L27 31 L14 29 Z" fill="#3fa35a"/><path d="M15.5 9.5 L27 11.5 V29 L15.5 27 Z M38.5 9.5 L27 11.5 V29 L38.5 27 Z" fill="#f4f1ec" stroke="#bbb" stroke-width="0.4"/><path d="M18 14 L25 15 M18 17 L25 18 M18 20 L25 21 M29 15 L36 14 M29 18 L36 17 M29 21 L36 20" stroke="#b9b4ad" stroke-width="0.8"/></g>
<path d="M31 19 L41 6 L44 8.5 L34 21 L30.5 22 Z" fill="#f2b43c"/><path d="M41 6 L42.6 4 L45.6 6.4 L44 8.5 Z" fill="#e8685a"/><path d="M31 19 L34 21 L30.5 22 Z" fill="#3b3b3b"/>
<path d="M52 10 C52 0 68 0 68 10" stroke="#2a63d8" stroke-width="2" fill="none"/>
<path d="M50 14 C50 5 70 5 70 14 V30 C70 33 50 33 50 30 Z" fill="#2f7df0"/><path d="M50 14 C50 5 60 5 60 5 V32 C55 32 50 32 50 30 Z" fill="#246be0"/>
<path d="M53 22 C53 17 67 17 67 22 V30 C67 32 53 32 53 30 Z" fill="#4a96ff"/><path d="M56 31.6 H64" stroke="#c77dff" stroke-width="1.4"/><circle cx="60" cy="22" r="0.9" fill="#d8e8ff"/></svg>
<svg class="a" style="left:352px;top:1052px" width="16" height="16" viewBox="0 0 16 16"><circle cx="8" cy="8" r="6.6" stroke="#fff" stroke-width="2" fill="none"/></svg>
<svg class="a" style="left:399px;top:1051px" width="18" height="17" viewBox="0 0 18 17"><g stroke="#fff" stroke-width="1.2" fill="none"><path d="M1 4 V1.6 H12.4 V4"/><path d="M1 5.4 H12.4 V12 H1 Z"/><path d="M1 13.4 V15.6 H12.4 V13.4"/><path d="M15.6 1 V4"/><path d="M15.6 8 V16"/></g><path d="M14.4 5 H16.8 V8 H14.4 Z" fill="#fff"/></svg>
<div class="a" style="left:447px;top:1048px;width:24px;height:24px;background:#f0832f;border-radius:3px;background:linear-gradient(#f79a45,#e8711f)"></div>
<svg class="a" style="left:449px;top:1051px" width="20" height="18" viewBox="0 0 20 18"><path d="M3.6 1.6 C6.4 0.6 8.6 2.4 10 4.4 C11.4 2.4 13.6 0.6 16.4 1.6 C19.2 2.8 19 6.4 16.8 8 L15.6 9 L16.8 10 C19 11.6 19.2 15.2 16.4 16.4 C13.6 17.4 11.4 15.6 10 13.6 C8.6 15.6 6.4 17.4 3.6 16.4 C0.8 15.2 1 11.6 3.2 10 L4.4 9 L3.2 8 C1 6.4 0.8 2.8 3.6 1.6 Z" fill="#fff"/><path d="M5 5 C6.6 4.4 8 6.6 8.6 9 C8 11.4 6.6 13.6 5 13 C3.6 12.4 4.6 10.4 6.4 9 C4.6 7.6 3.6 5.6 5 5 Z M15 5 C13.4 4.4 12 6.6 11.4 9 C12 11.4 13.4 13.6 15 13 C16.4 12.4 15.4 10.4 13.6 9 C15.4 7.6 16.4 5.6 15 5 Z" fill="#f0832f"/></svg>
<svg class="a" style="left:496.5px;top:1051px" width="23" height="18" viewBox="0 0 23 18"><path d="M0.6 1.6 C0.6 1 1 0.6 1.6 0.6 H8 L9.8 2.6 H21.4 C22 2.6 22.4 3 22.4 3.6 V5 H0.6 Z" fill="#e8a825"/><path d="M0.6 4.4 H22.4 V16.4 C22.4 17 22 17.4 21.4 17.4 H1.6 C1 17.4 0.6 17 0.6 16.4 Z" fill="#ffd866"/><path d="M0.6 4.4 H22.4 V7 H0.6 Z" fill="#fbc740"/><path d="M6.6 10.4 H16.4 V17.4 H13.6 V13.4 H9.4 V17.4 H6.6 Z" fill="#3e9be8"/></svg>
<svg class="a" style="left:545px;top:1048px" width="24" height="24" viewBox="0 0 24 24"><circle cx="12" cy="12" r="11.8" fill="#fff"/><path d="M12 0.2 A11.8 11.8 0 0 1 22.2 6.1 H12 A5.9 5.9 0 0 0 6.9 9.05 L1.8 6.1 A11.8 11.8 0 0 1 12 0.2 Z" fill="#e33b2e"/><path d="M1.8 6.1 A11.8 11.8 0 0 0 12 23.8 L17.1 14.95 A5.9 5.9 0 0 1 6.9 14.95 Z" fill="#2da94f"/><path d="M22.2 6.1 A11.8 11.8 0 0 1 12 23.8 L17.1 14.95 A5.9 5.9 0 0 0 17.1 9.05 L12 6.1 Z" fill="#fbc116"/><path d="M12 6.1 H22.2 L17.1 9.05 Z" fill="#fbc116"/><circle cx="12" cy="12" r="5.4" fill="#fff"/><circle cx="12" cy="12" r="4.3" fill="#4a8af4"/></svg>
<svg class="a" style="left:594px;top:1048px" width="24" height="24" viewBox="0 0 24 24"><path d="M17.4 0.4 L23.4 3.2 V20.8 L17.4 23.6 L5.4 13.4 L2 16 L0.4 15 V9 L2 8 L5.4 10.6 Z" fill="#1f9cf0"/><path d="M17.4 0.4 L23.4 3.2 V20.8 L17.4 23.6 Z" fill="#2ab0f6"/><path d="M17.4 6.6 L10.4 12 L17.4 17.4 Z" fill="#1c1c1c"/><path d="M0.4 9 L2 8 L17.4 23.6 L15 22.6 L0.4 9.6 Z M0.4 15 L2 16 L17.4 0.4 L15 1.4 L0.4 14.4 Z" fill="#0b79c8"/></svg>
<div class="a" style="left:631px;top:1040px;width:48px;height:40px;background:#484848;"></div>
<div class="a" style="left:631px;top:1077.5px;width:48px;height:2.5px;background:#76b9ed;"></div>
<svg class="a" style="left:645px;top:1048.5px" width="21" height="23" viewBox="0 0 21 23"><path d="M10.5 0.4 L20.4 6 V17 L10.5 22.6 L0.6 17 V6 Z" fill="#111"/><path d="M10.5 0.4 L0.6 6 L10.5 11.6 L20.4 6 Z" fill="#4d4d4d"/><path d="M0.6 6 V17 L10.5 22.6 V11.6 Z" fill="#2e2e2e"/><path d="M10.5 4.6 L16.4 8 V15 L10.5 18.6 L4.6 15 V8 Z" fill="#fff"/><path d="M10.5 11.4 V18 M10.5 11.4 L5 8.4 M10.5 11.4 L16 8.4" stroke="#1a1a1a" stroke-width="1.7" fill="none"/></svg>
<div class="a" style="left:684px;top:1077.5px;width:40px;height:2.5px;background:#76b9ed;"></div>
<div class="a" style="left:693px;top:1048px;width:23px;height:23px;background:#0b0f5c;border:1.4px solid #8db3f5"></div>
<div class="tk" style="left:693px;top:1050px;width:23px;text-align:center;font-size:13.5px;font-weight:bold;color:#8db3f5;line-height:18px;height:18px;letter-spacing:-0.3px">Ps</div>
<svg class="a" style="left:1479px;top:1050px" width="25" height="22" viewBox="0 0 25 22"><circle cx="16.4" cy="7.4" r="5.2" fill="#f59b23"/><circle cx="16.4" cy="7.4" r="3.6" fill="#f8b23a"/><path d="M5.6 20.6 C2.6 20.6 0.6 18.6 0.6 16.2 C0.6 13.8 2.6 12 4.8 12.2 C5.4 9 8.2 7 11.2 7 C14.4 7 16.8 9 17.6 11.8 C21 11.6 24 13.4 24 16.6 C24 19 22 20.6 19.6 20.6 Z" fill="#dfe6f0"/><path d="M5.6 20.6 C2.6 20.6 0.6 18.6 0.6 16.2 C2 18.4 4 18.8 6 18.8 H20 C22 18.8 23.6 17.8 24 16.6 C24 19 22 20.6 19.6 20.6 Z" fill="#7fa8e6"/></svg>
<div class="tk" style="left:1511.7px;top:1050px;font-size:15.2px;letter-spacing:-1.953px;">18°C</div>
<div class="tk" style="left:1549.7px;top:1050px;font-size:15.2px;letter-spacing:-0.746px;">Mayorm. nubla...</div>
<svg class="a" style="left:1676.5px;top:1055px" width="13" height="8" viewBox="0 0 13 8"><path d="M0.8 7 L6.5 1.2 L12.2 7" stroke="#fff" stroke-width="1.3" fill="none"/></svg>
<svg class="a" style="left:1699px;top:1053px" width="17" height="13" viewBox="0 0 17 13"><path d="M5.6 3 H15 V11 H5.6 Z" stroke="#fff" stroke-width="1.1" fill="none"/><path d="M15.4 5.4 H16.6 V8.6 H15.4 Z" fill="#fff"/><path d="M1 0.6 V2.6 M3.4 0.6 V2.6 M0.2 2.6 H4.2 V4.8 C4.2 6 3.2 6.4 2.2 6.4 C1.2 6.4 0.2 6 0.2 4.8 Z M2.2 6.4 V8.4 H5" stroke="#fff" stroke-width="1" fill="none"/></svg>
<svg class="a" style="left:1725.5px;top:1052px" width="14" height="14" viewBox="0 0 14 14"><g stroke="#fff" stroke-width="1.2" fill="none"><path d="M0.8 12.6 A11.8 11.8 0 0 1 12.6 0.8" opacity="0.55"/><path d="M4.2 12.6 A8.4 8.4 0 0 1 12.6 4.2"/><path d="M7.6 12.6 A5 5 0 0 1 12.6 7.6"/></g><circle cx="11.6" cy="11.8" r="1.3" fill="#fff"/></svg>
<svg class="a" style="left:1746.5px;top:1052px" width="17" height="15" viewBox="0 0 17 15"><path d="M0.6 5 H3.4 L7 1.4 V13.6 L3.4 10 H0.6 Z" stroke="#fff" stroke-width="1.1" fill="none"/><g stroke="#fff" stroke-width="1.1" fill="none"><path d="M9.4 5.2 C10.4 6.4 10.4 8.6 9.4 9.8"/><path d="M11.6 3.2 C13.6 5.4 13.6 9.6 11.6 11.8"/><path d="M13.8 1.2 C16.8 4.6 16.8 10.4 13.8 13.8"/></g></svg>
<div class="tk" style="left:1774.2px;top:1050px;font-size:12.2px;letter-spacing:-1.447px;">CAT</div>
<div class="tk" style="left:1821.5px;top:1041px;font-size:12.2px;letter-spacing:-1.007px;">14:08</div>
<div class="tk" style="left:1809.8px;top:1059px;font-size:12.2px;letter-spacing:-0.371px;">19/2/2024</div>
<svg class="a" style="left:1879px;top:1052px" width="16" height="16" viewBox="0 0 16 16"><path d="M0.4 0.4 H15.6 V12 H10 L8 15.2 L6 12 H0.4 Z" fill="#fff"/><path d="M3 3.6 H13 M3 6.2 H13 M3 8.8 H13" stroke="#1c1c1c" stroke-width="1.1"/></svg>
<div class="a" style="left:1915px;top:1044px;width:1px;height:36px;background:#555;"></div>
<svg class="a" style="left:0;top:0" width="1920" height="1080" viewBox="0 0 1920 1080"><path d="M1273.5 255 L1450.0 130.5" stroke="#fff" stroke-width="2.4" fill="none"/><polygon points="1465.5,119.5 1451.1,135.5 1445.6,127.7" fill="#fff"/></svg>
<div class="a" style="left:1471px;top:118px;width:186px;height:283px;background:#f2f2f2;border:1px solid #ccc;box-shadow:2px 2px 3px rgba(0,0,0,0.45)"></div>
<div class="a" style="left:1474px;top:150px;width:180px;height:22px;background:#91c9f7;"></div>
<div class="mi dis" style="left:1505.8px;top:124px;font-size:12.2px;letter-spacing:-0.402px;">Set Active Scene</div>
<div class="mi" style="left:1505.8px;top:153px;font-size:12.2px;letter-spacing:-0.865px;">Save Scene</div>
<div class="mi" style="left:1505.8px;top:175px;font-size:12.2px;letter-spacing:-0.728px;">Save Scene As</div>
<div class="mi dis" style="left:1505.8px;top:197px;font-size:12.2px;letter-spacing:-0.455px;">Save All</div>
<div class="mi dis" style="left:1505.8px;top:226px;font-size:12.2px;letter-spacing:-0.394px;">Unload Scene</div>
<div class="mi dis" style="left:1505.8px;top:248px;font-size:12.2px;letter-spacing:-0.555px;">Remove Scene</div>
<div class="mi dis" style="left:1505.8px;top:270px;font-size:12.2px;letter-spacing:-0.333px;">Discard changes</div>
<div class="mi" style="left:1505.8px;top:299px;font-size:12.2px;letter-spacing:-0.536px;">Select Scene Asset</div>
<div class="mi" style="left:1505.8px;top:321px;font-size:12.2px;letter-spacing:-0.357px;">Add New Scene</div>
<div class="mi" style="left:1505.8px;top:350px;font-size:12.2px;letter-spacing:-0.388px;">Prefab</div>
<div class="mi" style="left:1505.8px;top:379px;font-size:12.2px;letter-spacing:-0.275px;">GameObject</div>
<div class="a" style="left:1501.5px;top:146px;width:152.5px;height:1px;background:#d7d7d7;"></div>
<div class="a" style="left:1501.5px;top:219px;width:152.5px;height:1px;background:#d7d7d7;"></div>
<div class="a" style="left:1501.5px;top:292px;width:152.5px;height:1px;background:#d7d7d7;"></div>
<div class="a" style="left:1501.5px;top:343px;width:152.5px;height:1px;background:#d7d7d7;"></div>
<div class="a" style="left:1501.5px;top:372px;width:152.5px;height:1px;background:#d7d7d7;"></div>
<svg class="a" style="left:1639.5px;top:353.3px" width="5" height="9" viewBox="0 0 5 9"><path d="M0.6 0.6 L4.2 4.5 L0.6 8.4" stroke="#222" stroke-width="1.1" fill="none"/></svg>
<svg class="a" style="left:1639.5px;top:382.3px" width="5" height="9" viewBox="0 0 5 9"><path d="M0.6 0.6 L4.2 4.5 L0.6 8.4" stroke="#222" stroke-width="1.1" fill="none"/></svg>
<svg class="a" style="left:0;top:0" width="1920" height="1080" viewBox="0 0 1920 1080"><path d="M1693.5 236.5 L1594.0 167.9" stroke="#fff" stroke-width="2" fill="none"/><polygon points="1577.5,156.5 1598.2,165.3 1593.1,172.7" fill="#fff"/></svg>
</body></html>
